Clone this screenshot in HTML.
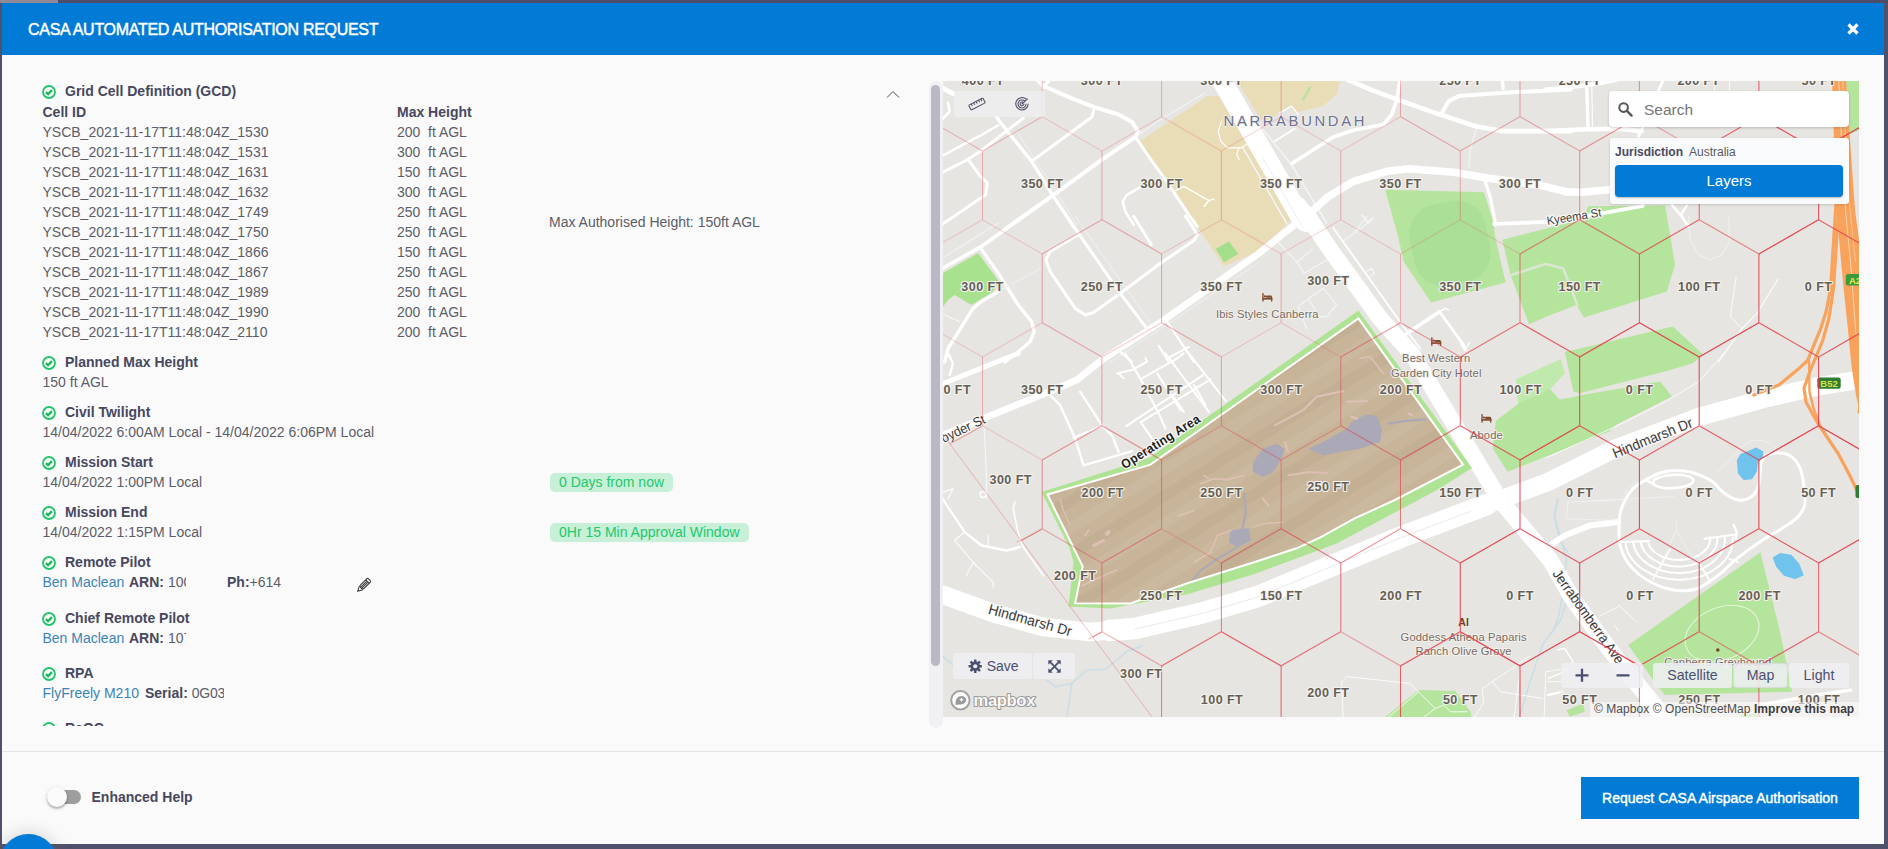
<!DOCTYPE html>
<html><head><meta charset="utf-8"><title>CASA Automated Authorisation Request</title>
<style>
*{box-sizing:border-box;margin:0;padding:0}
html,body{width:1888px;height:849px;overflow:hidden;background:#4f506b;font-family:"Liberation Sans",sans-serif;font-size:14px;color:#575962}
.abs{position:absolute;white-space:nowrap}
#topbar{left:0;top:0;width:1888px;height:3px;background:#4c4c6b}
#topbar i{position:absolute;left:0;top:0;width:58px;height:3px;background:#8f8a96}
#modal{left:2px;top:3px;width:1882px;height:841px;background:#fafafb;overflow:hidden}
#hdr{left:0;top:0;width:1882px;height:52px;background:#027bd7}
#title{left:26px;top:17.5px;font-size:16px;font-weight:normal;color:#fff;line-height:18px;letter-spacing:-0.3px;-webkit-text-stroke:0.45px #fff}
#close{left:1842px;top:17px;width:18px;height:18px}
#footline{left:0;top:748px;width:1882px;height:1px;background:#e3e4e8}
.h{font-weight:bold;color:#47485e;line-height:20px;height:20px}
.t{line-height:20px;height:20px;color:#5b5d68}
.lnk{color:#3b84b5}
.b{font-weight:bold;color:#47485e}
.ck{width:14px;height:14px}
.badge{background:#c8efd8;color:#22c96c;border-radius:5px;height:19px;line-height:19px;padding:0 9px;font-size:14px}
#btn{left:1579px;top:774px;width:278px;height:42px;background:#027bd7;color:#fff;text-align:center;line-height:42px;font-size:14px;-webkit-text-stroke:0.4px #fff}
#fab{left:-1px;top:833.5px;width:59px;height:59px;border-radius:30px;background:#027bd7;box-shadow:0 0 14px 4px rgba(120,110,100,0.18)}
#trk{left:46px;top:787px;width:33px;height:14px;border-radius:7px;background:#9e9e9e}
#knob{left:44.5px;top:783.5px;width:20px;height:20px;border-radius:10px;background:#fafafa;box-shadow:0 2px 2px rgba(0,0,0,.22),0 1px 4px rgba(0,0,0,.14)}
#sbt{left:926.5px;top:77.5px;width:14px;height:647px;border-radius:7px;background:#f1f1f4}
#sbh{left:929px;top:82px;width:8.5px;height:581px;border-radius:4.5px;background:#b9b9c5}
</style></head><body>
<div id="topbar" class="abs"><i></i></div>
<div id="modal" class="abs">
<div id="hdr" class="abs"></div>
<div id="title" class="abs">CASA AUTOMATED AUTHORISATION REQUEST</div>
<svg id="close" class="abs" viewBox="0 0 18 18"><path d="M4.5 4.5L13.5 13.5M13.5 4.5L4.5 13.5" stroke="#fff" stroke-width="3.2" fill="none"/></svg>
<div id="left" class="abs" style="left:0;top:52px;width:925px;height:671.3px;overflow:hidden">
<svg class="abs" style="left:39.25px;top:29px;width:16px;height:16px" viewBox="0 0 16 16"><circle cx="8" cy="8" r="6" fill="none" stroke="#22c46a" stroke-width="1.8"/><path d="M4.9 8.1L7.1 10.2L10.9 6.1" fill="none" stroke="#16b85a" stroke-width="2.3"/></svg>
<div class="abs h" style="left:63px;top:26px">Grid Cell Definition (GCD)</div>
<div class="abs h" style="left:40.5px;top:47px">Cell ID</div>
<div class="abs h" style="left:395px;top:47px">Max Height</div>
<div class="abs t" style="left:40.5px;top:67px;">YSCB_2021-11-17T11:48:04Z_1530</div>
<div class="abs t" style="left:395px;top:67px;">200</div>
<div class="abs t" style="left:426px;top:67px;">ft AGL</div>
<div class="abs t" style="left:40.5px;top:87px;">YSCB_2021-11-17T11:48:04Z_1531</div>
<div class="abs t" style="left:395px;top:87px;">300</div>
<div class="abs t" style="left:426px;top:87px;">ft AGL</div>
<div class="abs t" style="left:40.5px;top:107px;">YSCB_2021-11-17T11:48:04Z_1631</div>
<div class="abs t" style="left:395px;top:107px;">150</div>
<div class="abs t" style="left:426px;top:107px;">ft AGL</div>
<div class="abs t" style="left:40.5px;top:127px;">YSCB_2021-11-17T11:48:04Z_1632</div>
<div class="abs t" style="left:395px;top:127px;">300</div>
<div class="abs t" style="left:426px;top:127px;">ft AGL</div>
<div class="abs t" style="left:40.5px;top:147px;">YSCB_2021-11-17T11:48:04Z_1749</div>
<div class="abs t" style="left:395px;top:147px;">250</div>
<div class="abs t" style="left:426px;top:147px;">ft AGL</div>
<div class="abs t" style="left:40.5px;top:167px;">YSCB_2021-11-17T11:48:04Z_1750</div>
<div class="abs t" style="left:395px;top:167px;">250</div>
<div class="abs t" style="left:426px;top:167px;">ft AGL</div>
<div class="abs t" style="left:40.5px;top:187px;">YSCB_2021-11-17T11:48:04Z_1866</div>
<div class="abs t" style="left:395px;top:187px;">150</div>
<div class="abs t" style="left:426px;top:187px;">ft AGL</div>
<div class="abs t" style="left:40.5px;top:207px;">YSCB_2021-11-17T11:48:04Z_1867</div>
<div class="abs t" style="left:395px;top:207px;">250</div>
<div class="abs t" style="left:426px;top:207px;">ft AGL</div>
<div class="abs t" style="left:40.5px;top:227px;">YSCB_2021-11-17T11:48:04Z_1989</div>
<div class="abs t" style="left:395px;top:227px;">250</div>
<div class="abs t" style="left:426px;top:227px;">ft AGL</div>
<div class="abs t" style="left:40.5px;top:247px;">YSCB_2021-11-17T11:48:04Z_1990</div>
<div class="abs t" style="left:395px;top:247px;">200</div>
<div class="abs t" style="left:426px;top:247px;">ft AGL</div>
<div class="abs t" style="left:40.5px;top:267px;">YSCB_2021-11-17T11:48:04Z_2110</div>
<div class="abs t" style="left:395px;top:267px;">200</div>
<div class="abs t" style="left:426px;top:267px;">ft AGL</div>
<div class="abs t" style="left:547px;top:157px;">Max Authorised Height: 150ft AGL</div>
<svg class="abs" style="left:39.25px;top:300px;width:16px;height:16px" viewBox="0 0 16 16"><circle cx="8" cy="8" r="6" fill="none" stroke="#22c46a" stroke-width="1.8"/><path d="M4.9 8.1L7.1 10.2L10.9 6.1" fill="none" stroke="#16b85a" stroke-width="2.3"/></svg>
<div class="abs h" style="left:63px;top:297px">Planned Max Height</div>
<div class="abs t" style="left:40.5px;top:317px;">150 ft AGL</div>
<svg class="abs" style="left:39.25px;top:350px;width:16px;height:16px" viewBox="0 0 16 16"><circle cx="8" cy="8" r="6" fill="none" stroke="#22c46a" stroke-width="1.8"/><path d="M4.9 8.1L7.1 10.2L10.9 6.1" fill="none" stroke="#16b85a" stroke-width="2.3"/></svg>
<div class="abs h" style="left:63px;top:347px">Civil Twilight</div>
<div class="abs t" style="left:40.5px;top:367px;">14/04/2022 6:00AM Local - 14/04/2022 6:06PM Local</div>
<svg class="abs" style="left:39.25px;top:400px;width:16px;height:16px" viewBox="0 0 16 16"><circle cx="8" cy="8" r="6" fill="none" stroke="#22c46a" stroke-width="1.8"/><path d="M4.9 8.1L7.1 10.2L10.9 6.1" fill="none" stroke="#16b85a" stroke-width="2.3"/></svg>
<div class="abs h" style="left:63px;top:397px">Mission Start</div>
<div class="abs t" style="left:40.5px;top:417px;">14/04/2022 1:00PM Local</div>
<svg class="abs" style="left:39.25px;top:450px;width:16px;height:16px" viewBox="0 0 16 16"><circle cx="8" cy="8" r="6" fill="none" stroke="#22c46a" stroke-width="1.8"/><path d="M4.9 8.1L7.1 10.2L10.9 6.1" fill="none" stroke="#16b85a" stroke-width="2.3"/></svg>
<div class="abs h" style="left:63px;top:447px">Mission End</div>
<div class="abs t" style="left:40.5px;top:467px;">14/04/2022 1:15PM Local</div>
<div class="abs badge" style="left:548px;top:418px">0 Days from now</div>
<div class="abs badge" style="left:548px;top:468px">0Hr 15 Min Approval Window</div>
<svg class="abs" style="left:39.25px;top:500px;width:16px;height:16px" viewBox="0 0 16 16"><circle cx="8" cy="8" r="6" fill="none" stroke="#22c46a" stroke-width="1.8"/><path d="M4.9 8.1L7.1 10.2L10.9 6.1" fill="none" stroke="#16b85a" stroke-width="2.3"/></svg>
<div class="abs h" style="left:63px;top:497px">Remote Pilot</div>
<div class="abs t" style="left:40.5px;top:517px;"><span class="lnk">Ben Maclean</span></div>
<div class="abs t" style="left:127px;top:517px;"><span class="b">ARN:</span> 10<span style="display:inline-block;width:2.5px;overflow:hidden;vertical-align:top">0</span></div>
<div class="abs t" style="left:225px;top:517px;"><span class="b">Ph:</span>+614</div>
<svg class="abs" style="left:353px;top:521.5px;width:17px;height:17px" viewBox="0 0 16 16"><g transform="rotate(45 8 8)" fill="none" stroke="#383838" stroke-width="1" stroke-linejoin="round"><rect x="5.7" y="0.2" width="4.6" height="11" rx="1.3"/><path d="M5.7 11.2L8 15.8L10.3 11.2M7.25 2.8V11.2M8.75 2.8V11.2M5.7 2.8h4.6"/></g></svg>
<svg class="abs" style="left:39.25px;top:556px;width:16px;height:16px" viewBox="0 0 16 16"><circle cx="8" cy="8" r="6" fill="none" stroke="#22c46a" stroke-width="1.8"/><path d="M4.9 8.1L7.1 10.2L10.9 6.1" fill="none" stroke="#16b85a" stroke-width="2.3"/></svg>
<div class="abs h" style="left:63px;top:553px">Chief Remote Pilot</div>
<div class="abs t" style="left:40.5px;top:573px;"><span class="lnk">Ben Maclean</span></div>
<div class="abs t" style="left:127px;top:573px;"><span class="b">ARN:</span> 10<span style="display:inline-block;width:2.5px;overflow:hidden;vertical-align:top">7</span></div>
<svg class="abs" style="left:39.25px;top:611px;width:16px;height:16px" viewBox="0 0 16 16"><circle cx="8" cy="8" r="6" fill="none" stroke="#22c46a" stroke-width="1.8"/><path d="M4.9 8.1L7.1 10.2L10.9 6.1" fill="none" stroke="#16b85a" stroke-width="2.3"/></svg>
<div class="abs h" style="left:63px;top:608px">RPA</div>
<div class="abs t" style="left:40.5px;top:628px;"><span class="lnk">FlyFreely M210</span></div>
<div class="abs t" style="left:143px;top:628px;"><span class="b">Serial:</span> <span style="letter-spacing:-0.2px">0G0</span><span style="display:inline-block;width:6.5px;overflow:hidden;vertical-align:top">3</span></div>
<svg class="abs" style="left:39.25px;top:666px;width:16px;height:16px" viewBox="0 0 16 16"><circle cx="8" cy="8" r="6" fill="none" stroke="#22c46a" stroke-width="1.8"/><path d="M4.9 8.1L7.1 10.2L10.9 6.1" fill="none" stroke="#16b85a" stroke-width="2.3"/></svg>
<div class="abs h" style="left:63px;top:663px">ReOC</div>
<svg class="abs" style="left:883px;top:33px;width:16px;height:12px" viewBox="0 0 16 12"><path d="M2 9.5L8 3.5L14 9.5" fill="none" stroke="#4a4b55" stroke-width="1"/></svg>
</div>
<svg class="abs" style="left:941px;top:78px;width:916px;height:636px" viewBox="943 81 916 636" font-family="Liberation Sans, sans-serif"><rect x="943" y="81" width="916" height="636" fill="#e6e5e1"/>
<path d="M1207.3 96.0 L1231.0 96.0 L1298.0 213.0 L1258.0 251.5 L1224.0 266.5 L1204.0 236.4 L1138.7 142.0Z" fill="#e8ddb6" />
<path d="M1253.0 81.0 L1340.0 81.0 L1336.6 94.4 L1323.3 106.1 L1294.8 112.8 L1289.0 106.1 L1279.8 112.8 L1263.0 122.8 L1243.0 91.0 L1237.9 81.0Z" fill="#e8ddb6" />
<path d="M1309.9 87.7 L1303.2 99.4" stroke="#b5e49d" stroke-width="2.2" fill="none" stroke-linecap="round" stroke-linejoin="round" />
<path d="M1215.7 248.9 L1229.0 241.4 L1238.2 254.0 L1224.0 262.3Z" fill="#a3de8a" />
<path d="M941.3 274.0 L978.1 253.1 L999.0 281.6 L993.2 291.6 L971.4 305.0 L954.7 294.9 L948.0 300.0 L941.3 309.2Z" fill="#a9e28f" />
<path d="M1385.2 189.7 L1483.8 192.2 L1493.9 223.0 L1494.7 234.7 L1505.6 282.4 L1431.2 302.5 L1403.6 261.5 L1398.5 238.1Z" fill="#b5e49d" />
<rect x="1411.5" y="202" width="77" height="83" rx="30" fill="#acdf96" transform="rotate(-12 1450 243.5)"/>
<path d="M1502.2 239.7 L1568.0 223.0 L1581.5 221.3 L1588.1 206.3 L1665.1 205.5 L1675.1 264.8 L1666.8 291.6 L1584.0 317.5 L1576.4 305.0 L1548.0 315.9 L1529.0 324.2 L1510.6 274.9Z" fill="#b5e49d" />
<path d="M1508.9 275.7 L1545.7 264.0 L1562.5 268.2 L1563.1 268.2 L1569.7 284.9 L1577.3 305.0" stroke="#dbe7d3" stroke-width="2.6" fill="none" stroke-linecap="round" stroke-linejoin="round" />
<path d="M1564.8 351.9 L1672.9 326.5 L1703.7 355.1 L1692.0 363.6 L1666.6 371.0 L1579.6 393.3 L1573.3 391.2Z" fill="#b5e49d" />
<path d="M1492.7 448.4 L1495.9 420.8 L1518.2 403.9 L1516.0 379.5 L1560.6 359.4 L1564.8 373.1 L1550.0 389.0 L1559.5 399.6 L1571.2 397.5 L1579.6 395.4 L1660.2 381.6 L1671.9 396.5 L1615.7 425.1 L1609.3 431.4 L1507.6 471.7Z" fill="#b5e49d" />
<path d="M1516.0 379.5 L1560.6 359.4 L1564.8 373.1 L1550.0 389.0 L1518.2 403.9Z" fill="#c0e9ae" />
<path d="M1837.4 81.0 L1860.8 81.0 L1860.8 129.5 L1844.1 136.2 L1840.7 127.8Z" fill="#b5e49d" />
<path d="M1760.4 552.2 L1780.5 634.0 L1792.2 691.8 L1665.1 695.1 L1656.7 685.1 L1628.3 644.9Z" fill="#b5e49d" />
<path d="M1383.5 718.5 L1418.6 690.1 L1455.4 690.9 L1470.5 711.8 L1472.1 718.5Z" fill="#b5e49d" />
<path d="M1566.4 710.2 L1583.1 703.5 L1584.8 711.8 L1569.7 716.8Z" fill="#b5e49d" />
<path d="M1740.4 715.2 L1757.1 713.5 L1758.8 718.5 L1740.4 718.5Z" fill="#b5e49d" />
<path d="M1737.9 460.3 L1741.0 455.0 L1748.5 451.8 L1755.9 448.6 L1762.2 451.8 L1762.2 457.1 L1756.9 461.4 L1755.9 470.9 L1751.6 478.3 L1744.2 479.0 L1738.9 473.0Z" fill="#6fc3ec" stroke="#6fc3ec" stroke-width="2" stroke-linejoin="round"/>
<path d="M1773.9 557.9 L1780.3 554.0 L1790.9 555.7 L1798.3 564.2 L1802.5 574.8 L1795.1 578.0 L1784.5 574.8 L1777.1 566.3Z" fill="#6fc3ec" stroke="#6fc3ec" stroke-width="2" stroke-linejoin="round"/>
<path d="M1046.7 680.0 L1055.1 686.7 L1071.8 683.4 L1086.9 670.0 L1105.3 669.2 L1127.0 651.6 L1142.1 645.7" stroke="#cbdde6" stroke-width="1.6" fill="none" stroke-linecap="round" stroke-linejoin="round" />
<path d="M1071.8 683.4 L1066.8 718.5" stroke="#cbdde6" stroke-width="1.6" fill="none" stroke-linecap="round" stroke-linejoin="round" />
<path d="M943.0 656.6 L953.0 665.0" stroke="#cbdde6" stroke-width="1.6" fill="none" stroke-linecap="round" stroke-linejoin="round" />
<path d="M1558.0 498.7 L1554.7 517.1 L1566.4 558.9 L1563.1 592.4 L1558.0 619.1 L1551.3 634.0" stroke="#cbdde6" stroke-width="1.6" fill="none" stroke-linecap="round" stroke-linejoin="round" />
<path d="M1557.4 498.7 L1554.1 517.1 L1560.8 542.2 L1568.0 552.2" stroke="#cbdde6" stroke-width="1.6" fill="none" stroke-linecap="round" stroke-linejoin="round" />
<path d="M1568.0 594.7 L1560.8 619.8 L1542.4 644.9 L1529.0 685.1 L1519.0 718.5" stroke="#cbdde6" stroke-width="1.6" fill="none" stroke-linecap="round" stroke-linejoin="round" /><path d="M1006.6 228.2 L1052.6 195.6 L1101.9 159.6 L1135.4 137.0" stroke="#ffffff" stroke-width="4.014720642355303" fill="none" stroke-linecap="round" stroke-linejoin="round" />
<path d="M1135.4 137.0 L1162.1 118.6 L1204.0 93.5" stroke="#f1f3f6" stroke-width="1.17096018735363" fill="none" stroke-linecap="round" stroke-linejoin="round" />
<path d="M1036.7 79.3 L1043.4 86.0 L1070.1 97.7 L1093.6 106.9 L1118.6 114.5 L1132.0 122.0 L1137.9 131.2 L1135.4 137.0" stroke="#ffffff" stroke-width="4.014720642355303" fill="none" stroke-linecap="round" stroke-linejoin="round" />
<path d="M1050.1 79.3 L1043.4 87.7" stroke="#ffffff" stroke-width="3.0110404817664773" fill="none" stroke-linecap="round" stroke-linejoin="round" />
<path d="M1094.4 107.8 L1091.9 117.0 L1031.7 161.3" stroke="#ffffff" stroke-width="3.0110404817664773" fill="none" stroke-linecap="round" stroke-linejoin="round" />
<path d="M996.5 117.0 L1009.9 134.5 L1031.7 161.3 L1053.4 196.4 L1073.5 226.5" stroke="#ffffff" stroke-width="3.345600535296086" fill="none" stroke-linecap="round" stroke-linejoin="round" />
<path d="M1016.6 131.2 L1060.1 198.1 L1076.8 224.9" stroke="#f1f3f6" stroke-width="0.8364001338240215" fill="none" stroke-linecap="round" stroke-linejoin="round" />
<path d="M941.3 173.0 L968.1 159.3 L982.3 149.9 L1023.3 118.1" stroke="#ffffff" stroke-width="3.0110404817664773" fill="none" stroke-linecap="round" stroke-linejoin="round" />
<path d="M968.1 159.3 L979.0 174.7 L987.3 183.0 L985.7 194.8 L941.3 224.9" stroke="#ffffff" stroke-width="3.0110404817664773" fill="none" stroke-linecap="round" stroke-linejoin="round" />
<path d="M941.3 156.3 L980.6 135.4 L998.2 125.3" stroke="#ffffff" stroke-width="2.34192037470726" fill="none" stroke-linecap="round" stroke-linejoin="round" />
<path d="M939.7 86.9 L953.0 93.5" stroke="#ffffff" stroke-width="5.018400802944129" fill="none" stroke-linecap="round" stroke-linejoin="round" />
<path d="M948.0 102.7 L949.7 111.1 L941.3 120.3" stroke="#ffffff" stroke-width="2.676480428236869" fill="none" stroke-linecap="round" stroke-linejoin="round" />
<path d="M1135.4 137.0 L1152.1 161.3 L1165.5 179.7 L1188.9 214.8 L1197.3 226.5" stroke="#ffffff" stroke-width="3.0110404817664773" fill="none" stroke-linecap="round" stroke-linejoin="round" />
<path d="M1140.4 187.2 L1127.0 194.8 L1122.8 201.4 L1125.3 211.5 L1133.7 224.9" stroke="#ffffff" stroke-width="2.676480428236869" fill="none" stroke-linecap="round" stroke-linejoin="round" />
<path d="M1173.8 191.4 L1183.9 186.4 L1209.0 200.6" stroke="#ffffff" stroke-width="1.5055202408832387" fill="none" stroke-linecap="round" stroke-linejoin="round" />
<path d="M1204.0 206.5 L1209.0 200.6 L1214.0 198.9" stroke="#ffffff" stroke-width="1.5055202408832387" fill="none" stroke-linecap="round" stroke-linejoin="round" />
<path d="M1221.5 121.1 L1218.2 131.2 L1220.7 141.2 L1227.4 147.9 L1240.8 147.9 L1249.1 142.9" stroke="#ffffff" stroke-width="1.17096018735363" fill="none" stroke-linecap="round" stroke-linejoin="round" />
<path d="M1239.1 147.9 L1236.6 154.6 L1239.1 159.6" stroke="#ffffff" stroke-width="1.17096018735363" fill="none" stroke-linecap="round" stroke-linejoin="round" />
<path d="M1346.7 79.3 L1370.1 89.4 L1396.9 99.4 L1437.0 113.6 L1475.5 126.2 L1503.9 131.2 L1570.8 131.2" stroke="#ffffff" stroke-width="4.68384074941452" fill="none" stroke-linecap="round" stroke-linejoin="round" />
<path d="M1442.0 112.8 L1448.7 101.1 L1458.8 96.1 L1503.9 92.7 L1570.8 89.4" stroke="#ffffff" stroke-width="4.014720642355303" fill="none" stroke-linecap="round" stroke-linejoin="round" />
<path d="M1502.2 79.3 L1503.1 88.5" stroke="#ffffff" stroke-width="3.345600535296086" fill="none" stroke-linecap="round" stroke-linejoin="round" />
<path d="M1400.2 79.3 L1396.9 99.4 L1391.8 114.5 L1383.5 124.5 L1353.4 130.3 L1333.3 137.0 L1291.5 163.8" stroke="#ffffff" stroke-width="3.6801605888256943" fill="none" stroke-linecap="round" stroke-linejoin="round" />
<path d="M1274.7 141.2 L1294.8 128.7" stroke="#ffffff" stroke-width="1.672800267648043" fill="none" stroke-linecap="round" stroke-linejoin="round" />
<path d="M1279.8 112.8 L1291.5 106.1 L1298.2 114.5" stroke="#ffffff" stroke-width="1.3382402141184344" fill="none" stroke-linecap="round" stroke-linejoin="round" />
<path d="M1263.0 129.5 L1291.5 164.6 L1326.6 223.0" stroke="#f4f5f8" stroke-width="1.5055202408832387" fill="none" stroke-linecap="round" stroke-linejoin="round" />
<path d="M1243.0 147.9 L1286.5 223.0" stroke="#f4f5f8" stroke-width="1.5055202408832387" fill="none" stroke-linecap="round" stroke-linejoin="round" />
<path d="M1484.7 179.7 L1490.5 198.1 L1495.6 224.9" stroke="#ffffff" stroke-width="3.345600535296086" fill="none" stroke-linecap="round" stroke-linejoin="round" />
<path d="M1476.3 128.7 L1470.5 147.9 L1468.8 168.0" stroke="#ffffff" stroke-width="0.6691201070592172" fill="none" stroke-linecap="round" stroke-linejoin="round" />
<path d="M1361.7 214.8 L1368.4 223.0" stroke="#ffffff" stroke-width="1.0036801605888257" fill="none" stroke-linecap="round" stroke-linejoin="round" />
<path d="M1373.4 218.2 L1366.8 223.0" stroke="#ffffff" stroke-width="1.0036801605888257" fill="none" stroke-linecap="round" stroke-linejoin="round" />
<path d="M1544.7 131.2 L1581.5 129.5 L1618.3 128.7 L1641.7 131.2" stroke="#ffffff" stroke-width="4.68384074941452" fill="none" stroke-linecap="round" stroke-linejoin="round" />
<path d="M1586.5 79.3 L1588.1 129.5" stroke="#ffffff" stroke-width="3.345600535296086" fill="none" stroke-linecap="round" stroke-linejoin="round" />
<path d="M1591.8 79.3 L1592.5 129.5" stroke="#ffffff" stroke-width="1.0036801605888257" fill="none" stroke-linecap="round" stroke-linejoin="round" />
<path d="M1544.7 89.4 L1581.5 86.0 L1603.2 82.7 L1618.3 79.3" stroke="#ffffff" stroke-width="4.014720642355303" fill="none" stroke-linecap="round" stroke-linejoin="round" />
<path d="M1663.4 79.3 L1641.7 129.5 L1638.3 136.2" stroke="#ffffff" stroke-width="3.0110404817664773" fill="none" stroke-linecap="round" stroke-linejoin="round" />
<path d="M1671.8 204.8 L1681.8 216.5 L1688.5 226.5" stroke="#ffffff" stroke-width="2.676480428236869" fill="none" stroke-linecap="round" stroke-linejoin="round" />
<path d="M1681.8 213.2 L1686.8 205.6" stroke="#ffffff" stroke-width="2.34192037470726" fill="none" stroke-linecap="round" stroke-linejoin="round" />
<path d="M1715.3 79.3 L1714.4 91.0" stroke="#ffffff" stroke-width="0.8364001338240215" fill="none" stroke-linecap="round" stroke-linejoin="round" />
<path d="M1729.5 79.3 L1729.5 91.0" stroke="#ffffff" stroke-width="0.8364001338240215" fill="none" stroke-linecap="round" stroke-linejoin="round" />
<path d="M941.3 269.0 L981.5 246.4 L1023.3 216.3" stroke="#ffffff" stroke-width="3.6801605888256943" fill="none" stroke-linecap="round" stroke-linejoin="round" />
<path d="M941.3 259.0 L998.2 223.0" stroke="#f1f3f6" stroke-width="1.0036801605888257" fill="none" stroke-linecap="round" stroke-linejoin="round" />
<path d="M1076.8 235.6 L1050.1 251.5 L1045.9 259.8 L1050.1 271.5 L1075.2 308.3 L1085.2 315.0 L1093.6 312.5 L1120.3 293.3 L1160.5 263.2 L1193.9 240.6 L1197.3 234.7 L1192.2 226.4 L1185.6 216.3" stroke="#ffffff" stroke-width="3.0110404817664773" fill="none" stroke-linecap="round" stroke-linejoin="round" />
<path d="M1066.8 216.3 L1085.2 243.1 L1120.3 293.3 L1145.4 326.7" stroke="#ffffff" stroke-width="3.0110404817664773" fill="none" stroke-linecap="round" stroke-linejoin="round" />
<path d="M1075.2 216.3 L1152.1 325.1" stroke="#f1f3f6" stroke-width="0.8364001338240215" fill="none" stroke-linecap="round" stroke-linejoin="round" />
<path d="M1133.7 216.3 L1151.3 244.8" stroke="#ffffff" stroke-width="3.0110404817664773" fill="none" stroke-linecap="round" stroke-linejoin="round" />
<path d="M980.6 248.1 L998.2 273.2 L1018.3 305.0 L1031.7 321.7 L1034.2 331.8 L1030.0 341.8 L1018.3 351.8 L1004.9 361.9" stroke="#ffffff" stroke-width="3.345600535296086" fill="none" stroke-linecap="round" stroke-linejoin="round" />
<path d="M944.7 361.9 L948.0 348.5 L973.1 308.3 L981.5 301.6 L998.2 291.6" stroke="#ffffff" stroke-width="3.345600535296086" fill="none" stroke-linecap="round" stroke-linejoin="round" />
<path d="M941.3 313.3 L959.7 321.7" stroke="#ffffff" stroke-width="0.8364001338240215" fill="none" stroke-linecap="round" stroke-linejoin="round" />
<path d="M1041.7 268.2 L1009.9 284.9 L998.2 291.6" stroke="#f1f3f6" stroke-width="0.8364001338240215" fill="none" stroke-linecap="round" stroke-linejoin="round" />
<path d="M1167.2 321.7 L1183.9 346.8 L1193.9 361.9" stroke="#ffffff" stroke-width="2.34192037470726" fill="none" stroke-linecap="round" stroke-linejoin="round" />
<path d="M1158.8 346.0 L1168.8 361.9" stroke="#ffffff" stroke-width="2.34192037470726" fill="none" stroke-linecap="round" stroke-linejoin="round" />
<path d="M1168.8 357.7 L1188.9 346.8" stroke="#ffffff" stroke-width="2.0073603211776514" fill="none" stroke-linecap="round" stroke-linejoin="round" />
<path d="M1120.3 351.8 L1132.0 361.9" stroke="#ffffff" stroke-width="2.34192037470726" fill="none" stroke-linecap="round" stroke-linejoin="round" />
<path d="M1110.3 361.9 L1163.8 326.7 L1258.0 263.2" stroke="#f1f3f6" stroke-width="0.8364001338240215" fill="none" stroke-linecap="round" stroke-linejoin="round" />
<path d="M1278.9 243.1 L1297.3 262.3 L1304.0 273.2" stroke="#f4f5f8" stroke-width="1.17096018735363" fill="none" stroke-linecap="round" stroke-linejoin="round" />
<path d="M1297.3 262.3 L1312.4 248.9" stroke="#f4f5f8" stroke-width="1.17096018735363" fill="none" stroke-linecap="round" stroke-linejoin="round" />
<path d="M1304.0 273.2 L1327.4 259.8" stroke="#f4f5f8" stroke-width="1.17096018735363" fill="none" stroke-linecap="round" stroke-linejoin="round" />
<path d="M1299.8 305.0 L1323.3 288.3 L1336.6 305.0 L1326.6 316.7 L1319.9 316.7" stroke="#f4f5f8" stroke-width="1.17096018735363" fill="none" stroke-linecap="round" stroke-linejoin="round" />
<path d="M1298.2 305.8 L1306.5 328.4" stroke="#f4f5f8" stroke-width="1.17096018735363" fill="none" stroke-linecap="round" stroke-linejoin="round" />
<path d="M1309.0 300.0 L1318.2 315.0" stroke="#f4f5f8" stroke-width="1.17096018735363" fill="none" stroke-linecap="round" stroke-linejoin="round" />
<path d="M1344.2 240.6 L1370.1 221.3" stroke="#f4f5f8" stroke-width="1.17096018735363" fill="none" stroke-linecap="round" stroke-linejoin="round" />
<path d="M1355.0 231.4 L1366.8 216.3" stroke="#f4f5f8" stroke-width="1.17096018735363" fill="none" stroke-linecap="round" stroke-linejoin="round" />
<path d="M1366.8 271.5 L1371.8 268.2 L1374.3 273.2 L1370.1 276.5" stroke="#f4f5f8" stroke-width="1.17096018735363" fill="none" stroke-linecap="round" stroke-linejoin="round" />
<path d="M1406.9 333.4 L1439.5 311.7" stroke="#ffffff" stroke-width="3.6801605888256943" fill="none" stroke-linecap="round" stroke-linejoin="round" />
<path d="M1439.5 311.7 L1463.8 345.1 L1465.4 350.2" stroke="#ffffff" stroke-width="2.676480428236869" fill="none" stroke-linecap="round" stroke-linejoin="round" />
<path d="M1439.5 311.7 L1445.4 308.3 L1448.7 310.0" stroke="#ffffff" stroke-width="1.3382402141184344" fill="none" stroke-linecap="round" stroke-linejoin="round" />
<path d="M1460.4 343.5 L1464.6 350.2 L1469.6 342.6" stroke="#ffffff" stroke-width="1.3382402141184344" fill="none" stroke-linecap="round" stroke-linejoin="round" />
<path d="M1494.0 224.2 L1549.0 221.6 L1593.7 214.9 L1643.0 205.9" stroke="#fff" stroke-width="3.7" fill="none" stroke-linecap="round" stroke-linejoin="round" />
<path d="M1688.5 216.3 L1690.2 239.7 L1698.6 254.8 L1710.3 259.8 L1722.0 254.8 L1729.5 241.4 L1728.7 216.3" stroke="#ffffff" stroke-width="0.5018400802944128" fill="none" stroke-linecap="round" stroke-linejoin="round" />
<path d="M1681.8 216.3 L1686.8 224.7" stroke="#ffffff" stroke-width="2.0073603211776514" fill="none" stroke-linecap="round" stroke-linejoin="round" />
<path d="M1736.2 276.5 L1730.3 316.7 L1742.0 328.4" stroke="#ffffff" stroke-width="0.8364001338240215" fill="none" stroke-linecap="round" stroke-linejoin="round" />
<path d="M1778.0 279.1 L1757.1 313.3 L1742.0 328.4 L1718.6 361.9" stroke="#ffffff" stroke-width="1.0036801605888257" fill="none" stroke-linecap="round" stroke-linejoin="round" />
<path d="M941.3 384.3 L976.5 370.1 L1018.3 353.3" stroke="#ffffff" stroke-width="5.018400802944129" fill="none" stroke-linecap="round" stroke-linejoin="round" />
<path d="M948.0 353.3 L953.0 363.4 L949.7 375.1" stroke="#ffffff" stroke-width="2.34192037470726" fill="none" stroke-linecap="round" stroke-linejoin="round" />
<path d="M1125.3 353.3 L1142.1 381.8 L1158.8 413.5 L1165.5 428.6" stroke="#ffffff" stroke-width="2.0073603211776514" fill="none" stroke-linecap="round" stroke-linejoin="round" />
<path d="M1157.1 373.4 L1180.5 410.2" stroke="#ffffff" stroke-width="2.0073603211776514" fill="none" stroke-linecap="round" stroke-linejoin="round" />
<path d="M1165.5 353.3 L1209.0 411.9" stroke="#ffffff" stroke-width="2.0073603211776514" fill="none" stroke-linecap="round" stroke-linejoin="round" />
<path d="M1188.9 353.3 L1225.7 401.0" stroke="#ffffff" stroke-width="2.0073603211776514" fill="none" stroke-linecap="round" stroke-linejoin="round" />
<path d="M1140.4 421.9 L1152.1 438.6" stroke="#ffffff" stroke-width="2.0073603211776514" fill="none" stroke-linecap="round" stroke-linejoin="round" />
<path d="M1172.2 395.1 L1183.9 411.9" stroke="#ffffff" stroke-width="2.0073603211776514" fill="none" stroke-linecap="round" stroke-linejoin="round" />
<path d="M1193.9 385.1 L1205.6 405.2" stroke="#ffffff" stroke-width="2.0073603211776514" fill="none" stroke-linecap="round" stroke-linejoin="round" />
<path d="M1117.0 373.4 L1132.0 370.1 L1147.1 361.7 L1145.4 358.3" stroke="#ffffff" stroke-width="2.0073603211776514" fill="none" stroke-linecap="round" stroke-linejoin="round" />
<path d="M1142.1 378.4 L1177.2 358.3 L1183.9 353.3" stroke="#ffffff" stroke-width="2.0073603211776514" fill="none" stroke-linecap="round" stroke-linejoin="round" />
<path d="M1126.2 426.1 L1203.1 375.1" stroke="#ffffff" stroke-width="2.0073603211776514" fill="none" stroke-linecap="round" stroke-linejoin="round" />
<path d="M1141.2 421.9 L1210.6 379.3" stroke="#ffffff" stroke-width="2.0073603211776514" fill="none" stroke-linecap="round" stroke-linejoin="round" />
<path d="M1118.6 373.4 L1123.7 378.4" stroke="#ffffff" stroke-width="2.0073603211776514" fill="none" stroke-linecap="round" stroke-linejoin="round" />
<path d="M1050.1 395.1 L1060.1 405.2 L1075.2 438.6 L1083.5 465.4 L1132.0 451.2" stroke="#ffffff" stroke-width="2.34192037470726" fill="none" stroke-linecap="round" stroke-linejoin="round" />
<path d="M1080.2 391.8 L1101.9 425.3 L1112.0 435.3 L1118.6 452.0" stroke="#ffffff" stroke-width="2.34192037470726" fill="none" stroke-linecap="round" stroke-linejoin="round" />
<path d="M1073.5 437.8 L1101.9 426.1" stroke="#ffffff" stroke-width="2.0073603211776514" fill="none" stroke-linecap="round" stroke-linejoin="round" />
<path d="M984.0 426.9 L985.7 455.4 L986.8 498.9" stroke="#f4f5f8" stroke-width="1.17096018735363" fill="none" stroke-linecap="round" stroke-linejoin="round" />
<path d="M941.3 493.0 L953.0 488.8 L948.0 498.9" stroke="#ffffff" stroke-width="1.0036801605888257" fill="none" stroke-linecap="round" stroke-linejoin="round" />
<path d="M1546.3 457.9 L1614.9 426.9 L1665.1 401.8 L1698.6 381.8 L1715.3 363.4 L1723.6 353.3" stroke="#ffffff" stroke-width="0.8364001338240215" fill="none" stroke-linecap="round" stroke-linejoin="round" />
<path d="M941.3 497.0 L964.7 532.1 L981.5 545.5 L1006.6 550.5 L1019.9 547.2" stroke="#ffffff" stroke-width="2.34192037470726" fill="none" stroke-linecap="round" stroke-linejoin="round" />
<path d="M1014.9 502.0 L1013.3 508.7 L1018.3 533.8 L1023.3 547.2 L1043.4 575.6" stroke="#ffffff" stroke-width="1.5055202408832387" fill="none" stroke-linecap="round" stroke-linejoin="round" />
<path d="M964.7 532.1 L954.7 540.5 L973.1 562.3 L993.2 582.3 L993.2 587.3" stroke="#ffffff" stroke-width="1.0036801605888257" fill="none" stroke-linecap="round" stroke-linejoin="round" />
<path d="M988.2 535.5 L988.2 547.2" stroke="#ffffff" stroke-width="1.0036801605888257" fill="none" stroke-linecap="round" stroke-linejoin="round" />
<path d="M973.1 562.3 L966.4 575.6" stroke="#ffffff" stroke-width="0.8364001338240215" fill="none" stroke-linecap="round" stroke-linejoin="round" />
<circle cx="983.1" cy="494.5" r="3" fill="none" stroke="#fff" stroke-width="1.3"/>
<path d="M1546.3 548.0 L1564.7 535.5 L1589.8 525.5 L1618.3 522.1" stroke="#ffffff" stroke-width="6.022080963532955" fill="none" stroke-linecap="round" stroke-linejoin="round" />
<path d="M1619.1 523.9 C1619.3 517.9 1619.1 514.7 1621.2 509.1 C1623.3 503.4 1627.6 494.9 1631.8 490.0 C1636.1 485.0 1641.4 482.4 1646.7 479.4 C1652.0 476.4 1657.3 473.4 1663.6 472.0 C1670.0 470.5 1678.8 470.4 1684.8 470.9 C1690.8 471.4 1695.1 473.4 1699.7 475.1 C1704.3 476.9 1708.5 478.7 1712.4 481.5 C1716.3 484.3 1719.1 489.1 1723.0 492.1 C1726.9 495.1 1731.5 498.5 1735.7 499.5 C1740.0 500.6 1744.9 500.1 1748.5 498.5 C1752.0 496.9 1755.0 493.9 1756.9 490.0 C1758.9 486.1 1759.4 479.7 1760.1 475.1 C1760.8 470.5 1760.0 465.8 1761.2 462.4 C1762.4 459.1 1764.4 456.6 1767.6 455.0 C1770.7 453.4 1776.4 452.7 1780.3 452.9 C1784.2 453.1 1787.7 453.8 1790.9 456.1 C1794.1 458.4 1797.2 462.1 1799.4 466.7 C1801.5 471.3 1802.7 477.3 1803.6 483.6 C1804.5 490.0 1805.7 499.2 1804.7 504.8 C1803.6 510.5 1801.0 513.7 1797.2 517.6 C1793.5 521.4 1788.4 524.3 1782.4 528.2 C1776.4 532.1 1768.6 535.9 1761.2 540.9 C1753.8 545.8 1744.9 552.2 1737.9 557.9 C1730.8 563.5 1725.1 569.9 1718.8 574.8 C1712.4 579.8 1705.3 584.9 1699.7 587.6 C1694.0 590.2 1690.8 590.7 1684.8 590.7 C1678.8 590.7 1670.7 589.8 1663.6 587.6 C1656.6 585.3 1648.4 581.2 1642.4 576.9 C1636.4 572.7 1631.3 567.4 1627.6 562.1 C1623.9 556.8 1621.6 551.5 1620.1 545.1 C1618.7 538.8 1618.9 529.9 1619.1 523.9Z" stroke="#fff" stroke-width="3" fill="none" stroke-linecap="round" stroke-linejoin="round"/>
<ellipse cx="1673.2" cy="481.5" rx="20.1" ry="6.6" transform="rotate(-3 1673.2 481.5)" fill="none" stroke="#fff" stroke-width="2.6"/>
<path d="M1645.6 480.0 L1653.0 483.6" stroke="#fff" stroke-width="2.4" fill="none" stroke-linecap="round" stroke-linejoin="round" />
<path d="M1647.9 541.3 A26.5 18.0 0 0 0 1709.9 536.3" stroke="#fff" stroke-width="2" fill="none"/>
<path d="M1640.5 541.3 A33.9 24.4 0 0 0 1717.3 536.3" stroke="#fff" stroke-width="2" fill="none"/>
<path d="M1633.1 541.3 A41.4 30.8 0 0 0 1724.8 536.3" stroke="#fff" stroke-width="2" fill="none"/>
<path d="M1625.2 541.3 A49.2 37.5 0 0 0 1732.6 536.3" stroke="#fff" stroke-width="2" fill="none"/>
<path d="M1621.2 542.0 L1649.2 540.9" stroke="#fff" stroke-width="2" fill="none" stroke-linecap="round" stroke-linejoin="round" />
<path d="M1704.3 538.8 L1735.7 534.5" stroke="#fff" stroke-width="2" fill="none" stroke-linecap="round" stroke-linejoin="round" />
<path d="M1653.0 579.1 L1670.0 549.4" stroke="#fff" stroke-width="1.8" fill="none" stroke-linecap="round" stroke-linejoin="round" />
<path d="M1699.7 564.2 L1710.3 581.2" stroke="#fff" stroke-width="1.8" fill="none" stroke-linecap="round" stroke-linejoin="round" />
<path d="M1733.6 525.0 L1736.8 532.4 L1735.7 538.8" stroke="#fff" stroke-width="2.4" fill="none" stroke-linecap="round" stroke-linejoin="round" />
<path d="M1676.4 519.7 L1676.4 530.3 L1663.6 557.9 L1653.0 579.1" stroke="#f3f3f3" stroke-width="0.7" fill="none" stroke-linecap="round" stroke-linejoin="round" />
<path d="M1676.4 530.3 L1691.2 555.7 L1699.7 566.3" stroke="#f3f3f3" stroke-width="0.7" fill="none" stroke-linecap="round" stroke-linejoin="round" />
<path d="M1591.5 500.6 L1621.2 499.5 L1674.2 496.4" stroke="#f3f3f3" stroke-width="0.7" fill="none" stroke-linecap="round" stroke-linejoin="round" />
<path d="M1621.2 499.5 L1627.6 487.9 L1638.2 481.5" stroke="#f3f3f3" stroke-width="0.7" fill="none" stroke-linecap="round" stroke-linejoin="round" />
<path d="M1714.5 473.0 C1716.6 471.3 1722.3 467.0 1727.3 462.4 C1732.2 457.8 1739.3 449.2 1744.2 445.5 C1749.2 441.7 1752.7 440.5 1756.9 440.1 C1761.2 439.8 1766.5 441.7 1769.7 443.3 C1772.9 444.9 1775.0 448.6 1776.0 449.7" stroke="#f3f3f3" stroke-width="0.7" fill="none" stroke-linecap="round" stroke-linejoin="round"/>
<path d="M1729.4 558.9 L1737.9 562.1" stroke="#fff" stroke-width="2" fill="none" stroke-linecap="round" stroke-linejoin="round" />
<ellipse cx="1722" cy="633.5" rx="38.5" ry="26" transform="rotate(-22 1722 633.5)" fill="none" stroke="#eef8e8" stroke-width="0.9"/>
<path d="M1568.1 502.0 L1614.9 500.4" stroke="#f4f5f8" stroke-width="0.6691201070592172" fill="none" stroke-linecap="round" stroke-linejoin="round" />
<path d="M1568.1 502.0 L1566.4 518.8 L1614.9 520.4" stroke="#f4f5f8" stroke-width="0.6691201070592172" fill="none" stroke-linecap="round" stroke-linejoin="round" />
<path d="M1599.9 615.8 L1619.9 605.8 L1635.0 620.8" stroke="#ffffff" stroke-width="0.8364001338240215" fill="none" stroke-linecap="round" stroke-linejoin="round" />
<path d="M1614.9 625.8 L1618.3 630.8" stroke="#ffffff" stroke-width="0.8364001338240215" fill="none" stroke-linecap="round" stroke-linejoin="round" />
<path d="M1343.3 718.5 L1341.7 681.7 L1346.7 676.7 L1410.2 683.4 L1418.6 691.8 L1435.3 708.5 L1443.7 705.1 L1450.4 711.8 L1467.1 711.8" stroke="#ffffff" stroke-width="0.8364001338240215" fill="none" stroke-linecap="round" stroke-linejoin="round" />
<path d="M1418.6 691.8 L1386.8 718.5" stroke="#ffffff" stroke-width="0.8364001338240215" fill="none" stroke-linecap="round" stroke-linejoin="round" />
<path d="M1435.3 708.5 L1422.0 718.5" stroke="#ffffff" stroke-width="0.8364001338240215" fill="none" stroke-linecap="round" stroke-linejoin="round" />
<path d="M1530.7 655.8 L1492.2 681.7 L1482.2 689.2 L1483.8 701.8 L1473.8 718.5" stroke="#ffffff" stroke-width="0.8364001338240215" fill="none" stroke-linecap="round" stroke-linejoin="round" />
<path d="M1492.2 681.7 L1500.6 691.8 L1542.4 698.4" stroke="#ffffff" stroke-width="0.8364001338240215" fill="none" stroke-linecap="round" stroke-linejoin="round" />
<path d="M1520.6 665.0 L1514.0 718.5" stroke="#ffffff" stroke-width="0.8364001338240215" fill="none" stroke-linecap="round" stroke-linejoin="round" />
<path d="M1544.1 718.5 L1545.7 671.7 L1568.0 668.3" stroke="#ffffff" stroke-width="0.8364001338240215" fill="none" stroke-linecap="round" stroke-linejoin="round" />
<path d="M1547.4 681.7 L1568.0 681.7" stroke="#ffffff" stroke-width="0.8364001338240215" fill="none" stroke-linecap="round" stroke-linejoin="round" />
<path d="M1758.8 705.1 L1815.6 695.1 L1850.8 690.1" stroke="#ffffff" stroke-width="3.345600535296086" fill="none" stroke-linecap="round" stroke-linejoin="round" />
<path d="M1558.0 649.9 L1564.7 648.3 L1573.1 661.6 L1564.7 671.7 L1548.0 678.4" stroke="#ffffff" stroke-width="1.3382402141184344" fill="none" stroke-linecap="round" stroke-linejoin="round" />
<path d="M1548.0 695.1 L1561.4 691.8" stroke="#ffffff" stroke-width="2.34192037470726" fill="none" stroke-linecap="round" stroke-linejoin="round" />
<path d="M1638.3 688.4 L1641.7 705.1 L1665.1 718.5" stroke="#ffffff" stroke-width="2.676480428236869" fill="none" stroke-linecap="round" stroke-linejoin="round" />
<path d="M930.0 590.0 L943.0 595.0 L993.0 613.0 L1043.0 627.0 L1089.0 632.0 L1135.0 628.5" stroke="#fff" stroke-width="18.5" fill="none" stroke-linecap="round" stroke-linejoin="round" />
<path d="M1110.0 630.5 L1135.0 628.5 L1202.0 613.0 L1258.0 596.4 L1400.0 537.5 L1487.0 504.5" stroke="#fff" stroke-width="21.5" fill="none" stroke-linecap="round" stroke-linejoin="round" />
<path d="M1400.0 537.5 L1487.0 504.5 L1548.0 482.0 L1615.0 448.7 L1698.6 417.0 L1765.5 398.5 L1815.6 386.8 L1870.0 378.0" stroke="#fff" stroke-width="18.2" fill="none" stroke-linecap="round" stroke-linejoin="round" />
<path d="M1135.0 629.0 L1202.0 613.5 L1258.0 597.0 L1400.0 538.0 L1470.0 511.5" stroke="#e0e0e4" stroke-width="0.7" fill="none" stroke-linecap="round" stroke-linejoin="round" />
<path d="M1308.2 214.8 L1328.3 196.4 L1353.4 181.4 L1386.8 171.3 L1408.6 168.8 L1453.7 172.2 L1487.2 178.0 L1537.4 184.7 L1568.0 192.2" stroke="#ffffff" stroke-width="7.527601204416193" fill="none" stroke-linecap="round" stroke-linejoin="round" />
<path d="M1564.7 191.7 L1581.5 192.2 L1611.6 189.4" stroke="#ffffff" stroke-width="7.527601204416193" fill="none" stroke-linecap="round" stroke-linejoin="round" />
<path d="M930.0 441.0 L943.0 435.3 L983.0 418.6 L1036.7 396.8 L1076.8 380.0 L1101.9 360.0 L1163.8 320.0 L1258.0 254.0 L1305.0 216.5" stroke="#fff" stroke-width="6.8" fill="none" stroke-linecap="round" stroke-linejoin="round" />
<path d="M1205.5 52.0 L1222.2 81.0 L1270.7 165.3 L1299.9 216.0 L1306.0 222.0" stroke="#fff" stroke-width="20" fill="none" stroke-linecap="round" stroke-linejoin="round" />
<path d="M1298.0 205.0 L1309.0 218.0 L1331.6 251.5 L1380.1 318.4 L1412.7 355.0 L1452.9 421.9 L1500.0 500.0 L1550.2 560.0 L1571.9 597.7 L1599.2 635.4 L1619.0 661.7 L1652.9 703.2 L1668.0 724.0" stroke="#fff" stroke-width="16.5" fill="none" stroke-linecap="round" stroke-linejoin="round" />
<path d="M1262.0 157.0 L1303.0 228.0" stroke="#e3e6ee" stroke-width="0.7" fill="none" stroke-linecap="round" stroke-linejoin="round" />
<path d="M1333.3 228.0 L1403.6 326.7 L1420.3 348.5" stroke="#ffffff" stroke-width="1.8400802944128472" fill="none" stroke-linecap="round" stroke-linejoin="round" />
<path d="M1420.3 401.8 L1453.7 448.7" stroke="#f1f3f6" stroke-width="0.8364001338240215" fill="none" stroke-linecap="round" stroke-linejoin="round" />
<path d="M1832.0 78.0 L1846.0 78.0 L1850.0 140.0 L1855.0 210.0 L1861.0 255.0 L1861.0 418.0 L1856.0 395.0 L1851.5 366.0 L1848.0 330.0 L1843.6 288.0 L1840.0 250.0 L1836.5 210.0 L1834.0 140.0Z" fill="#f9a25b" />
<path d="M1838.6 78.0 L1841.5 140.0 L1845.5 210.0 L1850.5 262.0 L1856.0 335.0" stroke="#fcd9b8" stroke-width="0.9" fill="none" stroke-linecap="round" stroke-linejoin="round" />
<path d="M1842.5 78.0 L1845.5 140.0 L1850.0 210.0 L1855.5 262.0" stroke="#fcd9b8" stroke-width="0.6" fill="none" stroke-linecap="round" stroke-linejoin="round" />
<path d="M1835.9 205.0 L1833.0 250.0 L1830.7 288.3 L1826.0 312.0 L1820.3 329.7 L1807.4 360.8 L1799.0 368.4 L1778.8 385.1 L1753.8 395.1" stroke="#f9a25b" stroke-width="3.2" fill="none" stroke-linecap="round" stroke-linejoin="round" />
<path d="M1838.8 205.0 L1836.0 250.0 L1833.5 288.3 L1829.0 318.0 L1822.9 340.1 L1810.0 371.2 L1804.0 388.0 L1806.0 402.0 L1817.7 423.0 L1838.4 454.0 L1850.0 476.0 L1861.0 499.0" stroke="#f9a25b" stroke-width="3.2" fill="none" stroke-linecap="round" stroke-linejoin="round" />
<path d="M1809.0 360.0 L1809.5 391.9 L1814.0 410.0 L1820.3 425.6" stroke="#f9a25b" stroke-width="2.4" fill="none" stroke-linecap="round" stroke-linejoin="round" />
<path d="M1861.0 395.0 L1859.0 412.0" stroke="#f9a25b" stroke-width="3" fill="none" stroke-linecap="round" stroke-linejoin="round" /><path d="M1041.5 492.0 L1149.0 458.0 L1358.5 310.5 L1472.0 468.0 L1437.0 490.0 L1336.6 543.5 L1253.0 574.5 L1188.0 594.0 L1110.0 608.5 L1068.5 606.5 L1073.5 562.3 L1070.0 549.0Z" fill="#aee394" />
<clipPath id="opc"><path d="M1047.5 494.5 L1150.4 464.6 L1358.4 318.4 L1463.0 464.6 L1394.9 500.0 L1354.2 518.6 L1320.3 537.3 L1296.6 548.3 L1252.5 562.7 L1188.1 583.0 L1130.5 603.4 L1075.1 603.2 L1082.7 566.4Z"/></clipPath>
<path d="M1047.5 494.5 L1150.4 464.6 L1358.4 318.4 L1463.0 464.6 L1394.9 500.0 L1354.2 518.6 L1320.3 537.3 L1296.6 548.3 L1252.5 562.7 L1188.1 583.0 L1130.5 603.4 L1075.1 603.2 L1082.7 566.4Z" fill="#c8b599" />
<g clip-path="url(#opc)"><path d="M1040 520 l440 -275" stroke="#4a3010" stroke-opacity="0.035" stroke-width="11" fill="none"/><path d="M1048 542 l440 -275" stroke="#ffffff" stroke-opacity="0.06" stroke-width="11" fill="none"/><path d="M1056 564 l440 -275" stroke="#4a3010" stroke-opacity="0.035" stroke-width="11" fill="none"/><path d="M1064 586 l440 -275" stroke="#ffffff" stroke-opacity="0.06" stroke-width="11" fill="none"/><path d="M1072 608 l440 -275" stroke="#4a3010" stroke-opacity="0.035" stroke-width="11" fill="none"/><path d="M1080 630 l440 -275" stroke="#ffffff" stroke-opacity="0.06" stroke-width="11" fill="none"/><path d="M1088 652 l440 -275" stroke="#4a3010" stroke-opacity="0.035" stroke-width="11" fill="none"/><path d="M1096 674 l440 -275" stroke="#ffffff" stroke-opacity="0.06" stroke-width="11" fill="none"/><path d="M1104 696 l440 -275" stroke="#4a3010" stroke-opacity="0.035" stroke-width="11" fill="none"/><path d="M1308.2 448.7 L1323.3 442.0 L1346.7 428.6 L1353.4 420.2 L1366.8 414.4 L1376.8 416.1 L1381.8 428.6 L1380.1 442.0 L1360.1 448.7 L1340.0 452.0 L1323.3 455.4Z" fill="#aba9b8" /><path d="M1253.0 462.1 L1263.0 448.7 L1276.4 443.7 L1284.8 448.7 L1281.4 458.7 L1273.1 472.1 L1263.0 477.1 L1253.0 472.1Z" fill="#aba9b8" /><path d="M1230.7 530.5 L1249.1 528.0 L1250.8 540.5 L1237.4 547.2 L1229.0 542.2Z" fill="#aba9b8" /><path d="M1244.1 493.7 L1245.8 512.1 L1242.4 528.8" stroke="#aba9b8" stroke-width="2.2" fill="none" stroke-linecap="round" stroke-linejoin="round" /><path d="M1237.4 547.2 L1217.3 558.9 L1200.6 570.6 L1190.6 582.3" stroke="#aba9b8" stroke-width="2" fill="none" stroke-linecap="round" stroke-linejoin="round" /><path d="M1388.5 423.6 L1403.6 421.1 L1425.3 419.4" stroke="#aba9b8" stroke-width="2.2" fill="none" stroke-linecap="round" stroke-linejoin="round" /><path d="M1274.7 425.3 L1303.2 410.2 L1316.6 396.8 L1343.3 391.0" stroke="#dfc0b5" stroke-width="2" fill="none" stroke-linecap="round" stroke-linejoin="round" /><path d="M1346.7 401.8 L1366.8 401.0" stroke="#dfc0b5" stroke-width="2" fill="none" stroke-linecap="round" stroke-linejoin="round" /><path d="M1351.7 416.9 L1356.7 418.6" stroke="#dfc0b5" stroke-width="2.5" fill="none" stroke-linecap="round" stroke-linejoin="round" /><path d="M1408.6 413.5 L1411.9 415.2" stroke="#dfc0b5" stroke-width="2.5" fill="none" stroke-linecap="round" stroke-linejoin="round" /><path d="M1360.1 358.3 L1370.1 356.7 L1376.8 365.0 L1383.5 373.4" stroke="#dfc0b5" stroke-width="1.6" fill="none" stroke-linecap="round" stroke-linejoin="round" /><path d="M1288.1 475.4 L1308.2 472.1 L1326.6 472.9" stroke="#dfc0b5" stroke-width="1.6" fill="none" stroke-linecap="round" stroke-linejoin="round" /><path d="M1284.8 442.0 L1288.1 452.0" stroke="#dfc0b5" stroke-width="2" fill="none" stroke-linecap="round" stroke-linejoin="round" /><path d="M1178.9 515.4 L1193.9 510.4" stroke="#dfc0b5" stroke-width="1.6" fill="none" stroke-linecap="round" stroke-linejoin="round" /><path d="M1193.9 562.3 L1210.6 552.2 L1217.3 535.5 L1230.7 530.5" stroke="#dfc0b5" stroke-width="1.6" fill="none" stroke-linecap="round" stroke-linejoin="round" /><path d="M1081.8 585.7 L1100.2 577.3 L1117.0 569.8" stroke="#dfc0b5" stroke-width="1.6" fill="none" stroke-linecap="round" stroke-linejoin="round" /><path d="M1085.2 535.5 L1088.5 530.5" stroke="#dfc0b5" stroke-width="2" fill="none" stroke-linecap="round" stroke-linejoin="round" /><path d="M1093.6 545.5 L1103.6 540.5" stroke="#dfc0b5" stroke-width="3" fill="none" stroke-linecap="round" stroke-linejoin="round" /><path d="M1106.9 533.8 L1108.6 532.1" stroke="#dfc0b5" stroke-width="4" fill="none" stroke-linecap="round" stroke-linejoin="round" /><path d="M1060.1 498.7 L1063.4 510.4 L1070.1 525.5" stroke="#dfc0b5" stroke-width="1.2" fill="none" stroke-linecap="round" stroke-linejoin="round" /><path d="M1253.0 527.1 L1263.0 523.8 L1283.1 522.1" stroke="#dfc0b5" stroke-width="1.4" fill="none" stroke-linecap="round" stroke-linejoin="round" /><path d="M1263.0 498.7 L1268.1 505.4" stroke="#dfc0b5" stroke-width="2" fill="none" stroke-linecap="round" stroke-linejoin="round" /><path d="M1200.6 483.8 L1214.0 478.8 L1227.4 479.6 L1244.1 475.4" stroke="#dfc0b5" stroke-width="1.6" fill="none" stroke-linecap="round" stroke-linejoin="round" /><path d="M1209.0 478.8 L1204.0 475.4" stroke="#dfc0b5" stroke-width="1.6" fill="none" stroke-linecap="round" stroke-linejoin="round" /></g>
<path d="M1047.5 494.5 L1150.4 464.6 L1358.4 318.4 L1463.0 464.6 L1394.9 500.0 L1354.2 518.6 L1320.3 537.3 L1296.6 548.3 L1252.5 562.7 L1188.1 583.0 L1130.5 603.4 L1075.1 603.2 L1082.7 566.4Z" fill="none" stroke="#fff" stroke-width="2" stroke-linejoin="miter"/><text transform="translate(1030.3 620) rotate(15.5) scale(0.96 1)" dy="0.35em" font-size="14.5" fill="#3b3b3b" font-weight="normal" letter-spacing="0.0" text-anchor="middle" stroke="#fbfaf8" stroke-width="2.4" paint-order="stroke" stroke-linejoin="round" >Hindmarsh Dr</text>
<text transform="translate(1652.5 437.8) rotate(-22) scale(0.95 1)" dy="0.35em" font-size="14.5" fill="#3b3b3b" font-weight="normal" letter-spacing="0.0" text-anchor="middle" stroke="#fbfaf8" stroke-width="2.4" paint-order="stroke" stroke-linejoin="round" >Hindmarsh Dr</text>
<text transform="translate(1588.5 616.5) rotate(54.5) scale(0.945 1)" dy="0.35em" font-size="14" fill="#3b3b3b" font-weight="normal" letter-spacing="0.0" text-anchor="middle" stroke="#fbfaf8" stroke-width="2.4" paint-order="stroke" stroke-linejoin="round" >Jerrabomberra Ave</text>
<text transform="translate(1574 216.5) rotate(-8.9) scale(0.94 1)" dy="0.35em" font-size="12" fill="#3b3b3b" font-weight="normal" letter-spacing="0.0" text-anchor="middle" stroke="#fbfaf8" stroke-width="2.4" paint-order="stroke" stroke-linejoin="round" >Kyeema St</text>
<text transform="translate(958.6 430.7) rotate(-25.6) scale(0.94 1)" dy="0.35em" font-size="13.5" fill="#3b3b3b" font-weight="normal" letter-spacing="0.0" text-anchor="middle" stroke="#fbfaf8" stroke-width="2.4" paint-order="stroke" stroke-linejoin="round" >Goyder St</text>
<text transform="translate(1160.5 441.5) rotate(-32.1) scale(0.93 1)" dy="0.35em" font-size="13" fill="#1c1c1c" font-weight="bold" letter-spacing="0.3" text-anchor="middle" stroke="#fbfaf8" stroke-width="2.4" paint-order="stroke" stroke-linejoin="round" >Operating Area</text>
<text x="1295.3" y="125.6" font-size="14.8" fill="#6d7190" letter-spacing="2.65" text-anchor="middle" stroke="#f1f0f0" stroke-width="1.6" paint-order="stroke">NARRABUNDAH</text>
<g transform="translate(1262.3 293.0)" fill="#7d4a2c"><rect x="0" y="0" width="1.3" height="8.5"/><rect x="0" y="5" width="10" height="1.6"/><rect x="8.7" y="4" width="1.3" height="4.5"/><rect x="3.6" y="2.6" width="6" height="2.2" rx="1"/><circle cx="2.6" cy="3.4" r="1.1"/></g><text x="1267.3" y="317.7" font-size="11.2" fill="#786c62" text-anchor="middle" letter-spacing="0.1" stroke="#f3f1ee" stroke-width="2" paint-order="stroke" stroke-linejoin="round">Ibis Styles Canberra</text>
<g transform="translate(1431.2 337.3)" fill="#7d4a2c"><rect x="0" y="0" width="1.3" height="8.5"/><rect x="0" y="5" width="10" height="1.6"/><rect x="8.7" y="4" width="1.3" height="4.5"/><rect x="3.6" y="2.6" width="6" height="2.2" rx="1"/><circle cx="2.6" cy="3.4" r="1.1"/></g><text x="1436.2" y="362.2" font-size="11.2" fill="#786c62" text-anchor="middle" letter-spacing="0.1" stroke="#f3f1ee" stroke-width="2" paint-order="stroke" stroke-linejoin="round">Best Western</text><text x="1436.2" y="376.6" font-size="11.2" fill="#786c62" text-anchor="middle" letter-spacing="0.1" stroke="#f3f1ee" stroke-width="2" paint-order="stroke" stroke-linejoin="round">Garden City Hotel</text>
<g transform="translate(1481.4 414.1)" fill="#7d4a2c"><rect x="0" y="0" width="1.3" height="8.5"/><rect x="0" y="5" width="10" height="1.6"/><rect x="8.7" y="4" width="1.3" height="4.5"/><rect x="3.6" y="2.6" width="6" height="2.2" rx="1"/><circle cx="2.6" cy="3.4" r="1.1"/></g><text x="1486.4" y="439.3" font-size="11.2" fill="#786c62" text-anchor="middle" letter-spacing="0.1" stroke="#f3f1ee" stroke-width="2" paint-order="stroke" stroke-linejoin="round">Abode</text>
<text x="1463.6" y="625.5" font-size="10.5" font-weight="bold" fill="#6b3d23" text-anchor="middle">Al</text><text x="1463.6" y="640.5" font-size="11.2" fill="#786c62" text-anchor="middle" letter-spacing="0.1" stroke="#f3f1ee" stroke-width="2" paint-order="stroke" stroke-linejoin="round">Goddess Athena Paparis</text><text x="1463.6" y="654.8" font-size="11.2" fill="#786c62" text-anchor="middle" letter-spacing="0.1" stroke="#f3f1ee" stroke-width="2" paint-order="stroke" stroke-linejoin="round">Ranch Olive Grove</text>
<circle cx="1717.8" cy="650" r="1.8" fill="#6b4a2f"/><text x="1717.8" y="665.5" font-size="11.2" fill="#786c62" text-anchor="middle" letter-spacing="0.1" stroke="#f3f1ee" stroke-width="2" paint-order="stroke" stroke-linejoin="round">Canberra Greyhound</text>
<rect x="1845.8" y="274" width="20" height="11.5" rx="2.2" fill="#3a9a3c"/><text x="1849" y="283.6" font-size="9.5" font-weight="bold" fill="#f2e94e">A23</text>
<rect x="1817.3" y="377.4" width="23.4" height="11.4" rx="2.2" fill="#2f7d32"/><text x="1829" y="386.8" font-size="9.5" font-weight="bold" fill="#d7e34a" text-anchor="middle">B52</text>
<rect x="1855.5" y="485" width="10" height="13" rx="2" fill="#2f7d32"/><path d="M943 434 L949.7 443.7 L1152 717 M949.7 443.7 L982.3 426.1 M1016.6 542.2 L1041.7 529.6 M1088.5 639.1 L1101.9 632.4" stroke="#e46a72" stroke-width="0.8" fill="none" opacity="0.55"/>
<clipPath id="hxc"><path d="M943 81H1859V717H1152L949.7 443.7L943 434Z"/></clipPath><g clip-path="url(#hxc)">
<path d="M922.7 48.0L982.5 13.8M922.7 116.6L982.5 150.9M982.5 13.8L1042.2 48.0M982.5 150.9L1042.2 116.6" stroke="#e43b48" stroke-width="1.05" fill="none" opacity="0.15"/>
<path d="M683.8 48.0L683.8 116.6M683.8 48.0L743.6 13.8M683.8 116.6L743.6 150.9M683.8 254.0L683.8 322.6M683.8 254.0L743.6 219.8M683.8 322.6L743.6 356.9M683.8 460.0L683.8 528.6M683.8 460.0L743.6 425.8M683.8 528.6L743.6 562.9M683.8 666.0L683.8 734.6M683.8 666.0L743.6 631.8M683.8 734.6L743.6 768.8M743.6 -55.0L743.6 13.6M743.6 -55.0L803.3 -89.2M743.6 13.6L803.3 47.9M743.6 13.8L803.3 48.0M743.6 150.9L803.3 116.6M743.6 151.0L743.6 219.6M743.6 151.0L803.3 116.8M743.6 219.6L803.3 253.9M743.6 219.8L803.3 254.0M743.6 356.9L803.3 322.6M743.6 357.0L743.6 425.6M743.6 357.0L803.3 322.8M743.6 425.6L803.3 459.9M743.6 425.8L803.3 460.0M743.6 562.9L803.3 528.6M743.6 563.0L743.6 631.6M743.6 563.0L803.3 528.8M743.6 631.6L803.3 665.8M743.6 631.8L803.3 666.0M743.6 768.8L803.3 734.6M743.6 769.0L743.6 837.6M743.6 769.0L803.3 734.8M743.6 837.6L803.3 871.8M803.3 -89.2L863.0 -55.0M803.3 47.9L863.0 13.6M803.3 48.0L863.0 13.8M803.3 116.6L863.0 150.9M803.3 116.8L863.0 151.0M803.3 253.9L863.0 219.6M803.3 254.0L863.0 219.8M803.3 322.6L863.0 356.9M803.3 322.8L863.0 357.0M803.3 459.9L863.0 425.6M803.3 460.0L863.0 425.8M803.3 528.6L863.0 562.9M803.3 528.8L863.0 563.0M803.3 665.8L863.0 631.6M803.3 666.0L863.0 631.8M803.3 734.6L863.0 768.8M803.3 734.8L863.0 769.0M803.3 871.8L863.0 837.6M863.0 -55.0L922.8 -89.2M863.0 13.6L922.8 47.9M863.0 13.8L922.7 48.0M863.0 150.9L922.7 116.6M863.0 151.0L922.8 116.8M863.0 219.6L922.8 253.9M863.0 219.8L922.7 254.0M863.0 356.9L922.7 322.6M863.0 357.0L922.8 322.8M863.0 425.6L922.8 459.9M863.0 425.8L922.7 460.0M863.0 562.9L922.7 528.6M863.0 563.0L922.8 528.8M863.0 631.6L922.8 665.8M863.0 631.8L922.7 666.0M863.0 768.8L922.7 734.6M863.0 769.0L922.8 734.8M863.0 837.6L922.8 871.8M922.7 254.0L982.5 219.8M922.7 322.6L982.5 356.9M922.7 460.0L982.5 425.8M922.7 528.6L982.5 562.9M922.7 666.0L982.5 631.8M922.7 734.6L982.5 768.8M922.8 -89.2L982.5 -55.0M922.8 47.9L982.5 13.6M922.8 116.8L982.5 151.0M922.8 253.9L982.5 219.6M922.8 322.8L982.5 357.0M922.8 459.9L982.5 425.6M922.8 528.8L982.5 563.0M922.8 665.8L982.5 631.6M922.8 734.8L982.5 769.0M922.8 871.8L982.5 837.6M982.5 -55.0L1042.2 -89.2M982.5 13.6L1042.2 47.9M982.5 151.0L1042.2 116.8M982.5 219.6L1042.2 253.9M982.5 219.8L1042.2 254.0M982.5 356.9L1042.2 322.6M982.5 357.0L1042.2 322.8M982.5 425.6L1042.2 459.9M982.5 425.8L1042.2 460.0M982.5 562.9L1042.2 528.6M982.5 631.8L1042.2 666.0M982.5 768.8L1042.2 734.6M982.5 769.0L1042.2 734.8M982.5 837.6L1042.2 871.8M1042.2 -89.2L1101.9 -55.0M1042.2 47.9L1101.9 13.6M1042.2 48.0L1101.9 13.8M1042.2 116.6L1101.9 150.9M1042.2 116.8L1101.9 151.0M1042.2 253.9L1101.9 219.6M1042.2 322.8L1101.9 357.0M1042.2 459.9L1101.9 425.6M1042.2 666.0L1101.9 631.8M1042.2 734.6L1101.9 768.8M1042.2 734.8L1101.9 769.0M1042.2 871.8L1101.9 837.6M1101.9 -55.0L1161.7 -89.2M1101.9 13.6L1161.7 47.9M1101.9 13.8L1161.6 48.0M1101.9 150.9L1161.6 116.6M1101.9 151.0L1161.7 116.8M1101.9 219.6L1161.7 253.9M1101.9 631.8L1161.6 666.0M1101.9 768.8L1161.6 734.6M1101.9 769.0L1161.7 734.8M1101.9 837.6L1161.7 871.8M1161.6 48.0L1221.4 13.8M1161.6 116.6L1221.4 150.9M1161.6 254.0L1221.4 219.8M1161.6 322.6L1221.4 356.9M1161.7 -89.2L1221.4 -55.0M1161.7 47.9L1221.4 13.6M1161.7 116.8L1221.4 151.0M1161.7 253.9L1221.4 219.6M1161.7 734.8L1221.4 769.0M1161.7 871.8L1221.4 837.6M1221.4 -55.0L1281.1 -89.2M1221.4 13.6L1281.1 47.9M1221.4 13.8L1281.1 48.0M1221.4 150.9L1281.1 116.6M1221.4 151.0L1281.1 116.8M1221.4 219.6L1281.1 253.9M1221.4 219.8L1281.1 254.0M1221.4 356.9L1281.1 322.6M1221.4 357.0L1281.1 322.8M1221.4 425.6L1281.1 459.9M1221.4 769.0L1281.1 734.8M1221.4 837.6L1281.1 871.8M1281.1 -89.2L1340.8 -55.0M1281.1 47.9L1340.8 13.6M1281.1 48.0L1340.8 13.8M1281.1 116.6L1340.8 150.9M1281.1 116.8L1340.8 151.0M1281.1 253.9L1340.8 219.6M1281.1 254.0L1340.8 219.8M1281.1 322.6L1340.8 356.9M1281.1 322.8L1340.8 357.0M1281.1 459.9L1340.8 425.6M1281.1 734.8L1340.8 769.0M1281.1 871.8L1340.8 837.6M1340.8 -55.0L1400.6 -89.2M1340.8 13.6L1400.6 47.9M1340.8 13.8L1400.5 48.0M1340.8 150.9L1400.5 116.6M1340.8 151.0L1400.6 116.8M1340.8 219.6L1400.6 253.9M1340.8 219.8L1400.5 254.0M1340.8 356.9L1400.5 322.6M1340.8 769.0L1400.6 734.8M1340.8 837.6L1400.6 871.8M1400.5 254.0L1460.2 219.8M1400.5 322.6L1460.2 356.9M1400.6 -89.2L1460.3 -55.0M1400.6 47.9L1460.3 13.6M1400.6 116.8L1460.3 151.0M1400.6 253.9L1460.3 219.6M1400.6 734.8L1460.3 769.0M1400.6 871.8L1460.3 837.6M1460.2 219.8L1520.0 254.0M1460.2 356.9L1520.0 322.6M1460.3 -55.0L1520.0 -89.2M1460.3 13.6L1520.0 47.9M1460.3 151.0L1520.0 116.8M1460.3 219.6L1520.0 253.9M1460.3 769.0L1520.0 734.8M1460.3 837.6L1520.0 871.8M1520.0 -89.2L1579.7 -55.0M1520.0 47.9L1579.7 13.6M1520.0 116.8L1579.7 151.0M1520.0 253.9L1579.7 219.6M1520.0 734.8L1579.7 769.0M1520.0 871.8L1579.7 837.6M1579.7 -55.0L1639.5 -89.2M1579.7 13.6L1639.5 47.9M1579.7 769.0L1639.5 734.8M1579.7 837.6L1639.5 871.8M1639.5 -89.2L1699.2 -55.0M1639.5 47.9L1699.2 13.6M1639.5 734.8L1699.2 769.0M1639.5 871.8L1699.2 837.6M1699.2 -55.0L1758.9 -89.2M1699.2 13.6L1758.9 47.9M1699.2 769.0L1758.9 734.8M1699.2 837.6L1758.9 871.8M1758.9 -89.2L1818.6 -55.0M1758.9 47.9L1818.6 13.6M1758.9 734.8L1818.6 769.0M1758.9 871.8L1818.6 837.6" stroke="#e43b48" stroke-width="1.05" fill="none" opacity="0.2"/>
<path d="M1042.2 254.0L1101.9 219.8M1042.2 322.6L1101.9 356.9M1101.9 219.8L1161.6 254.0M1101.9 356.9L1161.6 322.6M1101.9 357.0L1161.7 322.8M1101.9 425.6L1161.7 459.9M1101.9 563.0L1161.7 528.8M1101.9 631.6L1161.7 665.8M1161.6 460.0L1221.4 425.8M1161.6 528.6L1221.4 562.9M1161.7 322.8L1221.4 357.0M1161.7 459.9L1221.4 425.6M1161.7 528.8L1221.4 563.0M1161.7 665.8L1221.4 631.6M1221.4 425.8L1281.1 460.0M1221.4 562.9L1281.1 528.6M1281.1 460.0L1340.8 425.8M1281.1 528.6L1340.8 562.9M1340.8 425.8L1400.5 460.0M1340.8 562.9L1400.5 528.6M1400.5 48.0L1460.2 13.8M1400.5 116.6L1460.2 150.9M1460.2 13.8L1520.0 48.0M1460.2 150.9L1520.0 116.6M1520.0 48.0L1579.7 13.8M1520.0 116.6L1579.7 150.9M1579.7 13.8L1639.4 48.0M1579.7 150.9L1639.4 116.6M1639.4 666.0L1699.2 631.8M1639.4 734.6L1699.2 768.8M1699.2 631.8L1758.9 666.0M1699.2 768.8L1758.9 734.6" stroke="#e43b48" stroke-width="1.05" fill="none" opacity="0.25"/>
<path d="M803.3 48.0L803.3 116.6M803.3 254.0L803.3 322.6M803.3 460.0L803.3 528.6M803.3 666.0L803.3 734.6M863.0 -55.0L863.0 13.6M863.0 151.0L863.0 219.6M863.0 357.0L863.0 425.6M863.0 563.0L863.0 631.6M863.0 769.0L863.0 837.6M922.7 48.0L922.7 116.6M922.7 254.0L922.7 322.6M922.7 460.0L922.7 528.6M922.7 666.0L922.7 734.6M982.5 -55.0L982.5 13.6M982.5 151.0L982.5 219.6M982.5 357.0L982.5 425.6M982.5 769.0L982.5 837.6M1042.2 48.0L1042.2 116.6M1042.2 666.0L1042.2 734.6M1101.9 -55.0L1101.9 13.6M1101.9 151.0L1101.9 219.6M1101.9 769.0L1101.9 837.6M1161.6 48.0L1161.6 116.6M1221.4 -55.0L1221.4 13.6M1221.4 151.0L1221.4 219.6M1221.4 769.0L1221.4 837.6M1281.1 48.0L1281.1 116.6M1281.1 254.0L1281.1 322.6M1340.8 -55.0L1340.8 13.6M1340.8 151.0L1340.8 219.6M1340.8 769.0L1340.8 837.6M1400.5 254.0L1400.5 322.6M1460.3 -55.0L1460.3 13.6M1460.3 151.0L1460.3 219.6M1460.3 769.0L1460.3 837.6M1579.7 -55.0L1579.7 13.6M1579.7 769.0L1579.7 837.6M1699.2 -55.0L1699.2 13.6M1699.2 769.0L1699.2 837.6" stroke="#e43b48" stroke-width="1.05" fill="none" opacity="0.35"/>
<path d="M982.5 563.0L1042.2 528.8M982.5 631.6L1042.2 665.8M1042.2 254.0L1042.2 322.6M1042.2 460.0L1101.9 425.8M1042.2 528.6L1101.9 562.9M1042.2 528.8L1101.9 563.0M1042.2 665.8L1101.9 631.6M1101.9 357.0L1101.9 425.6M1101.9 425.8L1161.6 460.0M1101.9 562.9L1161.6 528.6M1161.6 254.0L1161.6 322.6M1221.4 357.0L1221.4 425.6M1281.1 666.0L1340.8 631.8M1281.1 734.6L1340.8 768.8M1340.8 357.0L1400.6 322.8M1340.8 425.6L1400.6 459.9M1340.8 563.0L1400.6 528.8M1340.8 631.6L1400.6 665.8M1340.8 631.8L1400.5 666.0M1340.8 768.8L1400.5 734.6M1400.5 48.0L1400.5 116.6M1400.6 322.8L1460.3 357.0M1400.6 459.9L1460.3 425.6M1400.6 528.8L1460.3 563.0M1400.6 665.8L1460.3 631.6M1579.7 151.0L1639.5 116.8M1579.7 219.6L1639.5 253.9M1639.4 48.0L1699.2 13.8M1639.4 116.6L1699.2 150.9M1639.5 116.8L1699.2 151.0M1639.5 253.9L1699.2 219.6M1699.2 13.8L1758.9 48.0M1699.2 150.9L1758.9 116.6M1699.2 563.0L1758.9 528.8M1699.2 631.6L1758.9 665.8M1758.9 528.8L1818.6 563.0M1758.9 665.8L1818.6 631.6" stroke="#e43b48" stroke-width="1.05" fill="none" opacity="0.4"/>
<path d="M1281.1 460.0L1281.1 528.6M1520.0 48.0L1520.0 116.6" stroke="#e43b48" stroke-width="1.05" fill="none" opacity="0.45"/>
<path d="M982.5 563.0L982.5 631.6M1042.2 460.0L1042.2 528.6M1221.4 563.0L1281.1 528.8M1221.4 631.6L1281.1 665.8M1281.1 528.8L1340.8 563.0M1281.1 665.8L1340.8 631.6M1340.8 357.0L1340.8 425.6M1400.5 460.0L1460.2 425.8M1400.5 528.6L1460.2 562.9M1460.2 425.8L1520.0 460.0M1460.2 562.9L1520.0 528.6M1520.0 254.0L1579.7 219.8M1520.0 322.6L1579.7 356.9M1579.7 151.0L1579.7 219.6M1579.7 219.8L1639.4 254.0M1579.7 356.9L1639.4 322.6" stroke="#e43b48" stroke-width="1.05" fill="none" opacity="0.5"/>
<path d="M1101.9 563.0L1101.9 631.6M1161.6 460.0L1161.6 528.6M1639.4 48.0L1639.4 116.6" stroke="#e43b48" stroke-width="1.05" fill="none" opacity="0.55"/>
<path d="M1161.6 666.0L1221.4 631.8M1161.6 734.6L1221.4 768.8M1221.4 631.8L1281.1 666.0M1221.4 768.8L1281.1 734.6M1460.3 357.0L1520.0 322.8M1460.3 425.6L1520.0 459.9M1520.0 254.0L1520.0 322.6M1520.0 322.8L1579.7 357.0M1520.0 459.9L1579.7 425.6M1639.4 254.0L1699.2 219.8M1639.4 322.6L1699.2 356.9M1699.2 151.0L1758.9 116.8M1699.2 219.6L1758.9 253.9M1699.2 219.8L1758.9 254.0M1699.2 356.9L1758.9 322.6M1758.9 116.8L1818.6 151.0M1758.9 253.9L1818.6 219.6M1758.9 666.0L1818.6 631.8M1758.9 734.6L1818.6 768.8M1818.6 563.0L1878.3 528.8M1818.6 631.6L1878.3 665.8M1818.6 631.8L1878.3 666.0M1818.6 768.8L1878.3 734.6M1878.3 528.8L1938.1 563.0M1878.3 665.8L1938.1 631.6M1878.3 666.0L1938.1 631.8M1878.3 734.6L1938.1 768.8M1938.1 631.8L1997.8 666.0M1938.1 768.8L1997.8 734.6M1997.8 666.0L1997.8 734.6" stroke="#e43b48" stroke-width="1.05" fill="none" opacity="0.6"/>
<path d="M1161.6 666.0L1161.6 734.6M1221.4 563.0L1221.4 631.6M1400.5 460.0L1400.5 528.6" stroke="#e43b48" stroke-width="1.05" fill="none" opacity="0.65"/>
<path d="M1340.8 563.0L1340.8 631.6M1400.5 666.0L1460.2 631.8M1400.5 734.6L1460.2 768.8M1460.2 631.8L1520.0 666.0M1460.2 768.8L1520.0 734.6M1520.0 666.0L1579.7 631.8M1520.0 734.6L1579.7 768.8M1579.7 631.8L1639.4 666.0M1579.7 768.8L1639.4 734.6M1758.9 48.0L1818.6 13.8M1758.9 116.6L1818.6 150.9M1758.9 460.0L1818.6 425.8M1758.9 528.6L1818.6 562.9M1758.9 666.0L1758.9 734.6M1818.6 13.8L1878.3 48.0M1818.6 150.9L1878.3 116.6M1818.6 425.8L1878.3 460.0M1818.6 562.9L1878.3 528.6M1878.3 460.0L1938.1 425.8M1878.3 528.6L1938.1 562.9M1938.1 425.8L1997.8 460.0M1938.1 562.9L1997.8 528.6M1997.8 460.0L1997.8 528.6" stroke="#e43b48" stroke-width="1.05" fill="none" opacity="0.7"/>
<path d="M1281.1 666.0L1281.1 734.6M1460.3 357.0L1460.3 425.6M1639.4 666.0L1639.4 734.6M1699.2 151.0L1699.2 219.6M1818.6 563.0L1818.6 631.6" stroke="#e43b48" stroke-width="1.05" fill="none" opacity="0.75"/>
<path d="M1400.5 666.0L1400.5 734.6M1460.3 563.0L1520.0 528.8M1460.3 631.6L1520.0 665.8M1520.0 460.0L1579.7 425.8M1520.0 528.6L1579.7 562.9M1520.0 528.8L1579.7 563.0M1520.0 665.8L1579.7 631.6M1579.7 357.0L1639.5 322.8M1579.7 425.6L1639.5 459.9M1579.7 425.8L1639.4 460.0M1579.7 562.9L1639.4 528.6M1579.7 563.0L1639.5 528.8M1579.7 631.6L1639.5 665.8M1639.4 254.0L1639.4 322.6M1639.4 460.0L1699.2 425.8M1639.4 528.6L1699.2 562.9M1639.5 322.8L1699.2 357.0M1639.5 459.9L1699.2 425.6M1639.5 528.8L1699.2 563.0M1639.5 665.8L1699.2 631.6M1699.2 357.0L1758.9 322.8M1699.2 425.6L1758.9 459.9M1699.2 425.8L1758.9 460.0M1699.2 562.9L1758.9 528.6M1758.9 48.0L1758.9 116.6M1758.9 254.0L1818.6 219.8M1758.9 322.6L1818.6 356.9M1758.9 322.8L1818.6 357.0M1758.9 459.9L1818.6 425.6M1818.6 -55.0L1878.3 -89.2M1818.6 13.6L1878.3 47.9M1818.6 151.0L1878.3 116.8M1818.6 219.6L1878.3 253.9M1818.6 219.8L1878.3 254.0M1818.6 356.9L1878.3 322.6M1818.6 357.0L1878.3 322.8M1818.6 425.6L1878.3 459.9M1818.6 769.0L1878.3 734.8M1818.6 837.6L1878.3 871.8M1878.3 -89.2L1938.1 -55.0M1878.3 47.9L1938.1 13.6M1878.3 48.0L1938.1 13.8M1878.3 116.6L1938.1 150.9M1878.3 116.8L1938.1 151.0M1878.3 253.9L1938.1 219.6M1878.3 254.0L1938.1 219.8M1878.3 322.6L1938.1 356.9M1878.3 322.8L1938.1 357.0M1878.3 459.9L1938.1 425.6M1878.3 666.0L1878.3 734.6M1878.3 734.8L1938.1 769.0M1878.3 871.8L1938.1 837.6M1938.1 -55.0L1997.8 -89.2M1938.1 13.6L1997.8 47.9M1938.1 13.8L1997.8 48.0M1938.1 150.9L1997.8 116.6M1938.1 151.0L1997.8 116.8M1938.1 219.6L1997.8 253.9M1938.1 219.8L1997.8 254.0M1938.1 356.9L1997.8 322.6M1938.1 357.0L1997.8 322.8M1938.1 425.6L1997.8 459.9M1938.1 563.0L1997.8 528.8M1938.1 631.6L1997.8 665.8M1938.1 769.0L1997.8 734.8M1938.1 837.6L1997.8 871.8M1997.8 -89.2L2057.5 -55.0M1997.8 47.9L2057.5 13.6M1997.8 48.0L1997.8 116.6M1997.8 116.8L2057.5 151.0M1997.8 253.9L2057.5 219.6M1997.8 254.0L1997.8 322.6M1997.8 322.8L2057.5 357.0M1997.8 459.9L2057.5 425.6M1997.8 528.8L2057.5 563.0M1997.8 665.8L2057.5 631.6M1997.8 734.8L2057.5 769.0M1997.8 871.8L2057.5 837.6M2057.5 -55.0L2057.5 13.6M2057.5 151.0L2057.5 219.6M2057.5 357.0L2057.5 425.6M2057.5 563.0L2057.5 631.6M2057.5 769.0L2057.5 837.6" stroke="#e43b48" stroke-width="1.05" fill="none" opacity="0.8"/>
<path d="M1818.6 -55.0L1818.6 13.6M1818.6 769.0L1818.6 837.6" stroke="#e43b48" stroke-width="1.05" fill="none" opacity="0.85"/>
<path d="M1460.3 563.0L1460.3 631.6M1520.0 460.0L1520.0 528.6M1520.0 666.0L1520.0 734.6M1579.7 357.0L1579.7 425.6M1699.2 563.0L1699.2 631.6M1758.9 254.0L1758.9 322.6M1818.6 151.0L1818.6 219.6M1878.3 460.0L1878.3 528.6M1938.1 563.0L1938.1 631.6" stroke="#e43b48" stroke-width="1.05" fill="none" opacity="0.9"/>
<path d="M1579.7 563.0L1579.7 631.6M1639.4 460.0L1639.4 528.6M1699.2 357.0L1699.2 425.6M1758.9 460.0L1758.9 528.6M1818.6 357.0L1818.6 425.6M1878.3 48.0L1878.3 116.6M1878.3 254.0L1878.3 322.6M1938.1 -55.0L1938.1 13.6M1938.1 151.0L1938.1 219.6M1938.1 357.0L1938.1 425.6M1938.1 769.0L1938.1 837.6" stroke="#e43b48" stroke-width="1.05" fill="none" opacity="0.95"/>
</g>
<g font-size="12.6" font-weight="bold" fill="#655f54" text-anchor="middle" letter-spacing="0.4" stroke="#f4f2ee" stroke-width="2.2" paint-order="stroke" stroke-linejoin="round"><text x="983" y="85.3">400 FT</text><text x="1102" y="85.3">300 FT</text><text x="1221.4" y="85.3">300 FT</text><text x="1460.4" y="85.3">250 FT</text><text x="1579.8" y="85.3">250 FT</text><text x="1698.6" y="85.3">200 FT</text><text x="1819" y="85.3">50 FT</text><text x="1042.2" y="188.2">350 FT</text><text x="1161.6" y="188.2">300 FT</text><text x="1281.1" y="188.2">350 FT</text><text x="1400.5" y="188.2">350 FT</text><text x="1520" y="188.2">300 FT</text><text x="982.5" y="291.2">300 FT</text><text x="1101.9" y="291.2">250 FT</text><text x="1221.4" y="291.2">350 FT</text><text x="1328.3" y="284.6">300 FT</text><text x="1460.3" y="291.2">350 FT</text><text x="1579.7" y="291.2">150 FT</text><text x="1699.2" y="291.2">100 FT</text><text x="1818.6" y="291.2">0 FT</text><text x="1042.2" y="394.3">350 FT</text><text x="1161.6" y="394.3">250 FT</text><text x="1281.4" y="394.3">300 FT</text><text x="1401" y="394.3">200 FT</text><text x="1520.6" y="394.3">100 FT</text><text x="1639.6" y="394.3">0 FT</text><text x="1759" y="394.3">0 FT</text><text x="1010.7" y="483.8">300 FT</text><text x="1102.7" y="497.1">200 FT</text><text x="1221.5" y="497.1">250 FT</text><text x="1328.3" y="490.5">250 FT</text><text x="1460.4" y="497.1">150 FT</text><text x="1579.7" y="497.1">0 FT</text><text x="1699.2" y="497.1">0 FT</text><text x="1818.6" y="497.1">50 FT</text><text x="1075.2" y="580.3">200 FT</text><text x="1161.3" y="600.4">250 FT</text><text x="1281.4" y="600.4">150 FT</text><text x="1401" y="600.4">200 FT</text><text x="1520" y="600.4">0 FT</text><text x="1640" y="600.4">0 FT</text><text x="1759.6" y="600.4">200 FT</text><text x="1141.2" y="678.4">300 FT</text><text x="1222" y="703.5">100 FT</text><text x="1328.3" y="696.5">200 FT</text><text x="1460.4" y="703.5">50 FT</text><text x="1579.8" y="703.5">50 FT</text><text x="1699.4" y="703.5">250 FT</text><text x="1819" y="703.5">100 FT</text><text x="943.5" y="394.3" text-anchor="start">0 FT</text></g></svg><div class="abs" style="left:951.8px;top:87.5px;width:91.0px;height:26.0px;background:rgba(238,238,240,0.82);border-radius:3px;"><svg style="position:absolute;left:13px;top:5px;width:20px;height:16px" viewBox="0 0 20 16"><g transform="rotate(-27 10 8)" fill="none" stroke="#4d4e63" stroke-width="1.05"><rect x="2" y="5.3" width="16" height="5.4" rx="0.8"/><path d="M5 5.3v2.4M7.7 5.3v2.4M10.4 5.3v2.4M13.1 5.3v2.4M15.6 5.3v2.4"/></g></svg><svg style="position:absolute;left:61.4px;top:6.1px;width:14px;height:14px" viewBox="0 0 14 14"><g fill="none" stroke="#4d4e63" stroke-width="1.05" stroke-linecap="round"><path d="M11.2 2.2A6.2 6.2 0 1 0 13.2 7"/><path d="M9.6 3.9A4 4 0 1 0 11 7"/><path d="M8.3 5.5A1.9 1.9 0 1 0 8.9 7"/><path d="M7 7L12.4 1.8"/></g></svg></div>
<div class="abs" style="left:1607.0px;top:88.0px;width:240.0px;height:36.0px;background:#fff;border-radius:4px;box-shadow:0 1px 3px rgba(0,0,0,.18);"><svg style="position:absolute;left:8px;top:10px;width:17px;height:17px" viewBox="0 0 17 17"><circle cx="6.6" cy="6.6" r="4.3" fill="none" stroke="#555" stroke-width="2"/><path d="M9.9 9.9L14.6 14.6" stroke="#555" stroke-width="2.4" stroke-linecap="round"/></svg><div class="abs" style="left:35px;top:8.5px;font-size:15.5px;line-height:20px;color:#757575">Search</div></div>
<div class="abs" style="left:1608.0px;top:135.0px;width:238.5px;height:66.0px;background:#f9fafb;border-radius:3px;box-shadow:0 1px 3px rgba(0,0,0,.15);"><div class="abs" style="left:5px;top:6px;font-size:12px;line-height:16px;color:#575962"><b style="color:#4a4b5f">Jurisdiction</b>&nbsp; Australia</div><div class="abs" style="left:5px;top:27px;width:228px;height:32px;border-radius:4px;background:#027bd7;color:#fff;font-size:15px;line-height:32px;text-align:center;box-shadow:0 1px 2px rgba(0,0,0,.25)">Layers</div></div>
<div class="abs" style="left:951.2px;top:650.0px;width:78.8px;height:26.0px;background:rgba(239,239,243,0.86);border-radius:3px;"><svg style="position:absolute;left:15px;top:5.5px;width:14.5px;height:14.5px" viewBox="0 0 16 16"><g fill="#4c5070"><circle cx="8" cy="8" r="5.2"/><g id="gt"><rect x="6.6" y="0.6" width="2.8" height="14.8" rx="0.6"/></g><use href="#gt" transform="rotate(45 8 8)"/><use href="#gt" transform="rotate(90 8 8)"/><use href="#gt" transform="rotate(135 8 8)"/></g><circle cx="8" cy="8" r="2.3" fill="#eeeef3"/></svg><div class="abs" style="left:33.5px;top:2.5px;line-height:21px;color:#4c5070;font-size:14.2px;text-align:center;font-size:14px">Save</div></div>
<div class="abs" style="left:1031.0px;top:650.0px;width:41.5px;height:26.0px;background:rgba(239,239,243,0.86);border-radius:3px;"><svg style="position:absolute;left:14.5px;top:6.5px;width:13px;height:13px" viewBox="0 0 14 14"><g stroke="#4c5070" stroke-width="1.9" fill="#4c5070"><path d="M2.4 2.4L11.6 11.6M11.6 2.4L2.4 11.6"/><path d="M0.6 0.6h4L0.6 4.6zM13.4 0.6v4L9.4 0.6zM0.6 13.4v-4L4.6 13.4zM13.4 13.4h-4L13.4 9.4z" stroke-width="0.5"/></g></svg></div>
<div class="abs" style="left:1558.5px;top:659.5px;width:82.0px;height:25.1px;background:rgba(239,239,243,0.86);border-radius:3px;"><svg style="position:absolute;left:0;top:0;width:82px;height:25px" viewBox="0 0 82 25"><path d="M14.5 12.3h13M21 5.8v13M55.5 12.3h13" stroke="#4c5070" stroke-width="2.3" fill="none"/></svg></div>
<div class="abs" style="left:1651.0px;top:659.5px;width:79.0px;height:25.1px;background:rgba(239,239,243,0.86);border-radius:3px;color:#4c5070;font-size:14.2px;text-align:center;line-height:25px;">Satellite</div>
<div class="abs" style="left:1730.8px;top:659.5px;width:55.4px;height:25.1px;background:rgba(239,239,243,0.86);border-radius:3px;color:#4c5070;font-size:14.2px;text-align:center;line-height:25px;box-shadow:inset 0 0 2px rgba(0,0,0,.25);">Map</div>
<div class="abs" style="left:1786.9px;top:659.5px;width:60.2px;height:25.1px;background:rgba(239,239,243,0.86);border-radius:3px;color:#4c5070;font-size:14.2px;text-align:center;line-height:25px;">Light</div>
<div class="abs" style="left:1588.0px;top:698.5px;width:269.0px;height:15.5px;background:rgba(255,255,255,0.55);font-size:12px;line-height:14px;color:#4e4e4e;padding-left:4px;letter-spacing:0.06px">© Mapbox © OpenStreetMap <b style="color:#3d3d3d">Improve this map</b></div>
<div class="abs" style="left:947.0px;top:685.0px;width:92.0px;height:25.0px;"><svg style="position:absolute;left:0;top:0;width:92px;height:25px" viewBox="0 0 92 25"><circle cx="11.4" cy="12.3" r="9.2" fill="#fff" fill-opacity="0.92" stroke="#8a8a8a" stroke-opacity=".75" stroke-width="2"/><path d="M6.6 16.8c-0.6-3.2 0.6-6.6 3.4-8.2c2.4-1.3 5.4-0.8 6.6 1.4c1.2 2.3 0 5-2.6 6c-2.3 0.9-4.9 0.4-7.4 0.8z" fill="#9a9a9a"/><path d="M12.4 9.6l0.7 1.5l1.5 0.7l-1.5 0.7l-0.7 1.5l-0.7-1.5l-1.5-0.7l1.5-0.7z" fill="#fff"/><text x="24.5" y="18" font-size="16.6" font-weight="bold" font-family="Liberation Sans, sans-serif" fill="#fff" fill-opacity=".94" stroke="#8a8a8a" stroke-opacity=".8" stroke-width="2.2" paint-order="stroke" stroke-linejoin="round" letter-spacing="-0.35">mapbox</text></svg></div>
<div id="footline" class="abs"></div>
<div id="btn" class="abs">Request CASA Airspace Authorisation</div>
<div id="trk" class="abs"></div><div id="knob" class="abs"></div>
<div class="abs h" style="left:89.5px;top:784px">Enhanced Help</div>
<div id="sbt" class="abs"></div><div id="sbh" class="abs"></div>
</div>
<div id="fab" class="abs"></div>
</body></html>
